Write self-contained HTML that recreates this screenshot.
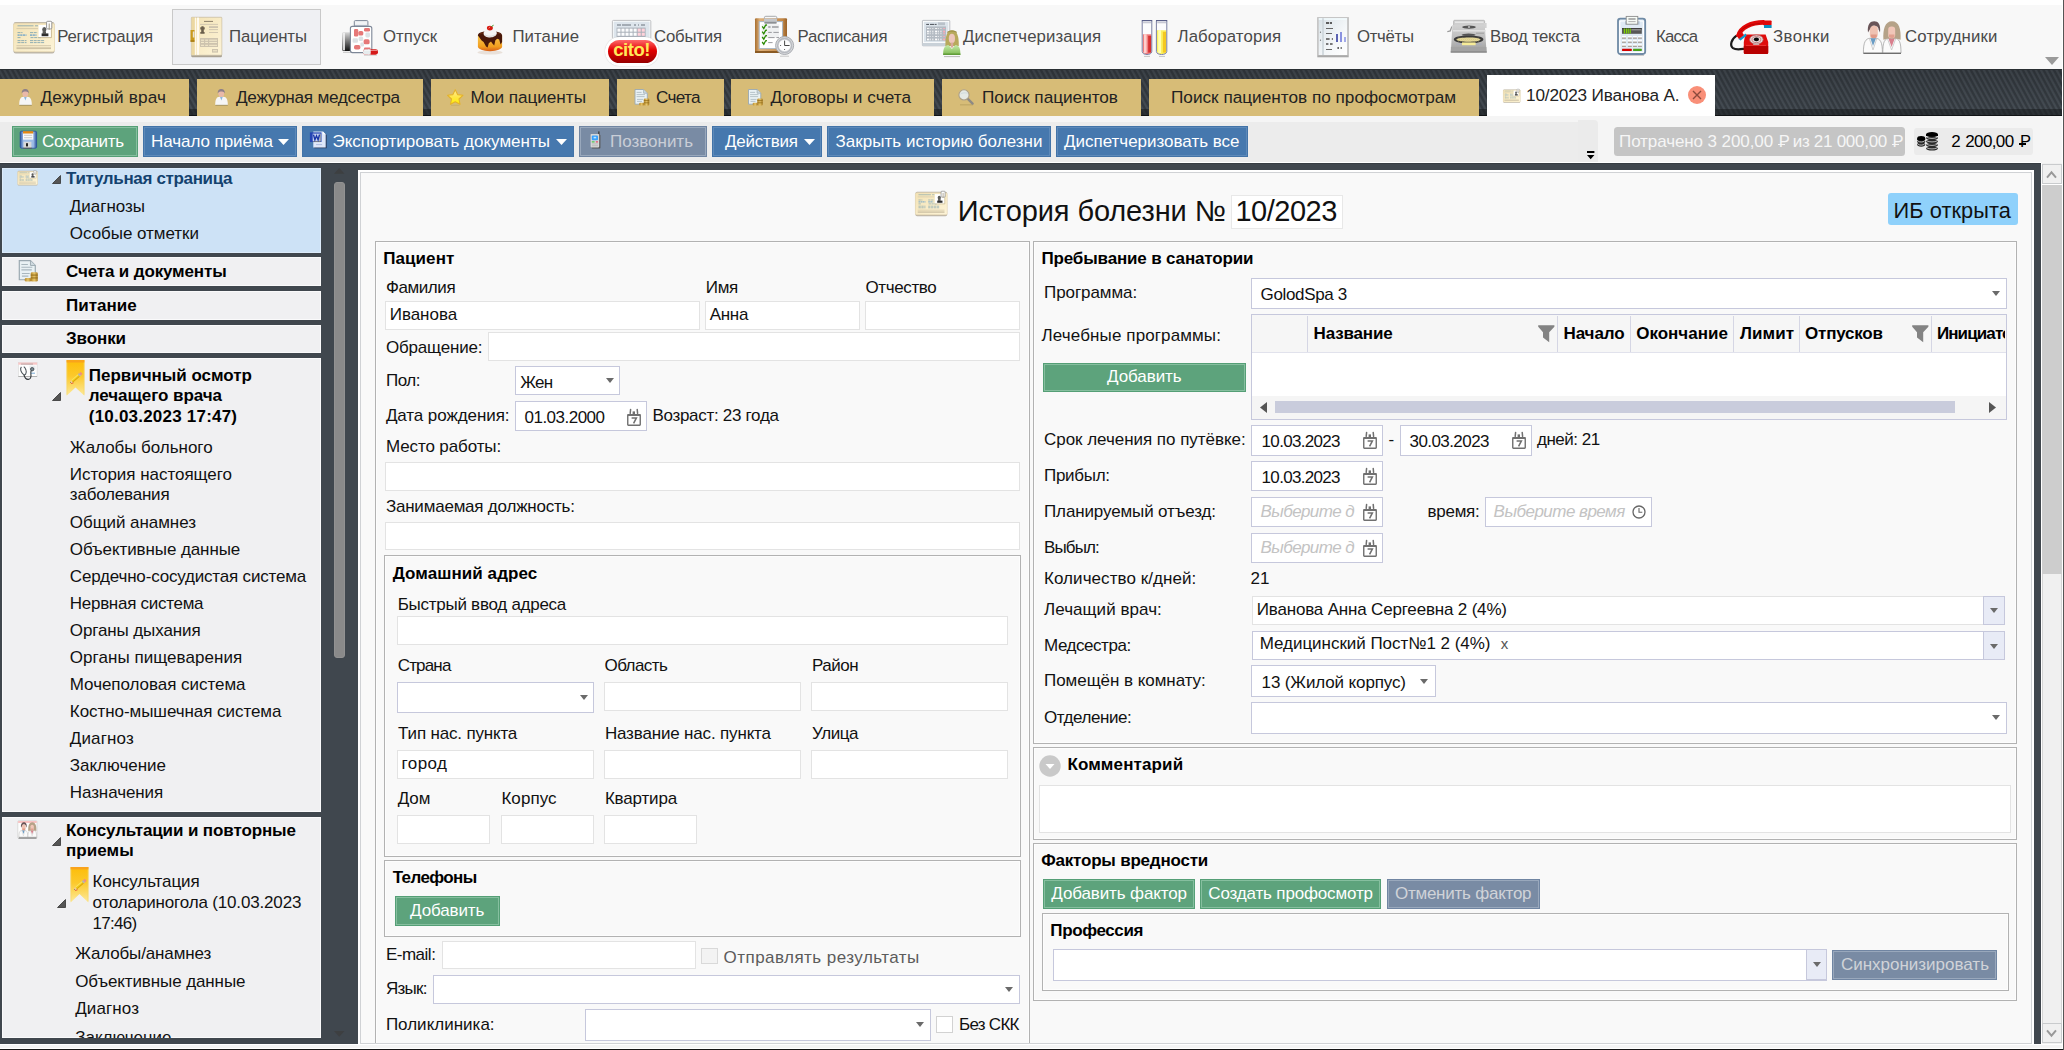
<!DOCTYPE html>
<html lang="ru"><head><meta charset="utf-8"><title>История болезни</title>
<style>
html,body{margin:0;padding:0}
body{width:2064px;height:1050px;overflow:hidden;position:relative;background:#40474e;font-family:"Liberation Sans",sans-serif;color:#000}
div,span.t,svg{position:absolute;box-sizing:border-box}
span.t{white-space:nowrap}
svg{overflow:visible}
.grp{background:#f9f9f9;border:1px solid #b2b2b2;box-shadow:inset 0 0 0 1px #fdfdfd}
.inp{background:#fff;border:1px solid #e3e3e3}
.cmb{background:#fff;border:1px solid #c6c8dc}
.tab{background:#d9ba70}
.li{background:#f0f0f2}

</style></head><body>
<div style="left:0px;top:0px;width:2064px;height:5px;background:#ffffff;"></div>
<div style="left:0px;top:5px;width:2062px;height:63.5px;background:#f8f8f8;"></div>
<div style="left:172px;top:9px;width:149px;height:56px;background:#eff0f3;border:1px solid #c9c9c9;"></div>
<span class="t" style="left:57.20px;top:29.00px;font-size:16.8px;line-height:16.8px;color:#4a4a4a;letter-spacing:-0.221px;">Регистрация</span>
<span class="t" style="left:229.00px;top:29.00px;font-size:16.8px;line-height:16.8px;color:#4a4a4a;letter-spacing:-0.105px;">Пациенты</span>
<span class="t" style="left:383.00px;top:29.00px;font-size:16.8px;line-height:16.8px;color:#4a4a4a;letter-spacing:0.047px;">Отпуск</span>
<span class="t" style="left:512.50px;top:29.00px;font-size:16.8px;line-height:16.8px;color:#4a4a4a;letter-spacing:0.042px;">Питание</span>
<span class="t" style="left:654.00px;top:29.00px;font-size:16.8px;line-height:16.8px;color:#4a4a4a;letter-spacing:-0.214px;">События</span>
<span class="t" style="left:797.50px;top:29.00px;font-size:16.8px;line-height:16.8px;color:#4a4a4a;letter-spacing:-0.253px;">Расписания</span>
<span class="t" style="left:963.00px;top:29.00px;font-size:16.8px;line-height:16.8px;color:#4a4a4a;letter-spacing:0.103px;">Диспетчеризация</span>
<span class="t" style="left:1177.50px;top:29.00px;font-size:16.8px;line-height:16.8px;color:#4a4a4a;letter-spacing:0.128px;">Лаборатория</span>
<span class="t" style="left:1357.00px;top:29.00px;font-size:16.8px;line-height:16.8px;color:#4a4a4a;letter-spacing:-0.312px;">Отчёты</span>
<span class="t" style="left:1490.00px;top:29.00px;font-size:16.8px;line-height:16.8px;color:#4a4a4a;letter-spacing:-0.292px;">Ввод текста</span>
<span class="t" style="left:1656.00px;top:29.00px;font-size:16.8px;line-height:16.8px;color:#4a4a4a;letter-spacing:-0.809px;">Касса</span>
<span class="t" style="left:1773.00px;top:29.00px;font-size:16.8px;line-height:16.8px;color:#4a4a4a;letter-spacing:0.463px;">Звонки</span>
<span class="t" style="left:1905.00px;top:29.00px;font-size:16.8px;line-height:16.8px;color:#4a4a4a;letter-spacing:0.177px;">Сотрудники</span>
<svg style="left:2045px;top:57px;" width="14" height="8" viewBox="0 0 14 8"><path d="M0 0H14L7 8Z" fill="#9a9a9a"/></svg>
<div style="left:0px;top:68.5px;width:2064px;height:47.5px;background:linear-gradient(rgba(0,0,0,0.14),rgba(0,0,0,0) 85%),repeating-linear-gradient(61.6deg,#343a40 0,#343a40 1.3px,#444b52 2.3px,#444b52 3.4px,#343a40 4.57px);"></div>
<div style="left:0px;top:68.5px;width:2064px;height:1px;background:#2a2f33;"></div>
<div style="left:0px;top:109px;width:2064px;height:6.5px;background:repeating-linear-gradient(61.6deg,#25292d 0,#25292d 1.3px,#2c3135 2.3px,#2c3135 3.4px,#25292d 4.57px);"></div>
<div style="left:0px;top:115.3px;width:2064px;height:0.9px;background:#121416;"></div>
<div style="left:0px;top:79px;width:189px;height:37px;background:#d7bc77;"></div>
<span class="t" style="left:40.50px;top:89.00px;font-size:17.2px;line-height:17.2px;color:#222;letter-spacing:0.150px;">Дежурный врач</span>
<div style="left:197px;top:79px;width:226px;height:37px;background:#d7bc77;"></div>
<span class="t" style="left:236.00px;top:89.00px;font-size:17.2px;line-height:17.2px;color:#222;letter-spacing:-0.268px;">Дежурная медсестра</span>
<div style="left:431px;top:79px;width:178px;height:37px;background:#d7bc77;"></div>
<span class="t" style="left:470.50px;top:89.00px;font-size:17.2px;line-height:17.2px;color:#222;letter-spacing:-0.050px;">Мои пациенты</span>
<div style="left:617px;top:79px;width:107px;height:37px;background:#d7bc77;"></div>
<span class="t" style="left:656.00px;top:89.00px;font-size:17.2px;line-height:17.2px;color:#222;letter-spacing:-0.727px;">Счета</span>
<div style="left:731px;top:79px;width:203px;height:37px;background:#d7bc77;"></div>
<span class="t" style="left:770.50px;top:89.00px;font-size:17.2px;line-height:17.2px;color:#222;letter-spacing:0.034px;">Договоры и счета</span>
<div style="left:942px;top:79px;width:199px;height:37px;background:#d7bc77;"></div>
<span class="t" style="left:982.00px;top:89.00px;font-size:17.2px;line-height:17.2px;color:#222;letter-spacing:-0.010px;">Поиск пациентов</span>
<div style="left:1149px;top:79px;width:330px;height:37px;background:#d7bc77;"></div>
<span class="t" style="left:1171.00px;top:89.00px;font-size:17.2px;line-height:17.2px;color:#222;">Поиск пациентов по профосмотрам</span>
<div style="left:1487px;top:75px;width:228px;height:41px;background:#ffffff;"></div>
<span class="t" style="left:1526.00px;top:87.00px;font-size:17.2px;line-height:17.2px;color:#222;letter-spacing:-0.166px;">10/2023 Иванова А.</span>
<svg style="left:1688px;top:86.1px;" width="18" height="18" viewBox="0 0 18 18"><circle cx="9" cy="9" r="9" fill="#f98f78"/><path d="M5 5L13 13M13 5L5 13" stroke="#8a4a3c" stroke-width="1.4"/></svg>
<div style="left:0px;top:116px;width:2064px;height:47px;background:#f5f5f5;"></div>
<div style="left:0px;top:122px;width:1579px;height:40px;background:#ececec;"></div>
<div style="left:1578px;top:120px;width:19.7px;height:42px;background:#ebebeb;border-top-right-radius:4px;"></div>
<div style="left:12px;top:126px;width:126px;height:31px;background:#5da37c;border:1px solid #559f76;box-shadow:inset 0 0 0 1px #86bf9f;"></div>
<div style="left:143px;top:126px;width:154px;height:31px;background:#4678ae;border:1px solid #4273a8;box-shadow:inset 0 0 0 1px #5d89b9;"></div>
<div style="left:302px;top:126px;width:272px;height:31px;background:#4678ae;border:1px solid #4273a8;box-shadow:inset 0 0 0 1px #4678ae;"></div>
<div style="left:579px;top:126px;width:128px;height:31px;background:#798ba4;border:1px solid #7085a2;box-shadow:inset 0 0 0 1px #99a8bc;"></div>
<div style="left:712px;top:126px;width:110px;height:31px;background:#4678ae;border:1px solid #4273a8;box-shadow:inset 0 0 0 1px #5d89b9;"></div>
<div style="left:827px;top:126px;width:224px;height:31px;background:#4678ae;border:1px solid #4273a8;box-shadow:inset 0 0 0 1px #5d89b9;"></div>
<div style="left:1056px;top:126px;width:192px;height:31px;background:#4678ae;border:1px solid #4273a8;box-shadow:inset 0 0 0 1px #5d89b9;"></div>
<span class="t" style="left:42.00px;top:133.00px;font-size:17px;line-height:17px;color:#fff;letter-spacing:-0.311px;">Сохранить</span>
<span class="t" style="left:151.00px;top:133.00px;font-size:17px;line-height:17px;color:#fff;letter-spacing:-0.060px;">Начало приёма</span>
<span class="t" style="left:332.50px;top:133.00px;font-size:17px;line-height:17px;color:#fff;">Экспортировать документы</span>
<span class="t" style="left:610.00px;top:133.00px;font-size:17px;line-height:17px;color:#c9ced7;letter-spacing:-0.014px;">Позвонить</span>
<span class="t" style="left:725.00px;top:133.00px;font-size:17px;line-height:17px;color:#fff;letter-spacing:-0.212px;">Действия</span>
<span class="t" style="left:835.50px;top:133.00px;font-size:17px;line-height:17px;color:#fff;letter-spacing:0.038px;">Закрыть историю болезни</span>
<span class="t" style="left:1064.00px;top:133.00px;font-size:17px;line-height:17px;color:#fff;letter-spacing:-0.016px;">Диспетчеризовать все</span>
<svg style="left:278px;top:139px;" width="11" height="6" viewBox="0 0 11 6"><path d="M0 0H11L5.5 6Z" fill="#fff"/></svg>
<svg style="left:556px;top:139px;" width="11" height="6" viewBox="0 0 11 6"><path d="M0 0H11L5.5 6Z" fill="#fff"/></svg>
<svg style="left:804px;top:139px;" width="11" height="6" viewBox="0 0 11 6"><path d="M0 0H11L5.5 6Z" fill="#fff"/></svg>
<svg style="left:1586.8px;top:151px;" width="7.4" height="8.4" viewBox="0 0 7.4 8.4"><path d="M0 0H7.4V1.9H0Z M0 4.1H7.4L3.7 8.2Z" fill="#000"/></svg>
<div style="left:1614.2px;top:127.2px;width:290.6px;height:28.5px;background:#c5c5c5;border-radius:3.5px;"></div>
<span class="t" style="left:1619.00px;top:133.00px;font-size:17px;line-height:17px;color:#f6f6f6;letter-spacing:-0.093px;">Потрачено 3 200,00</span>
<span class="t" style="left:1778.70px;top:133.00px;font-size:16.5px;line-height:16.5px;color:#f6f6f6;">Р</span>
<div style="left:1778.2px;top:143.6px;width:6.6px;height:1.4px;background:#f6f6f6;"></div>
<span class="t" style="left:1792.70px;top:133.00px;font-size:17px;line-height:17px;color:#f6f6f6;letter-spacing:-0.278px;">из 21 000,00</span>
<span class="t" style="left:1892.50px;top:133.00px;font-size:16.5px;line-height:16.5px;color:#f6f6f6;">Р</span>
<div style="left:1892px;top:143.6px;width:6.6px;height:1.4px;background:#f6f6f6;"></div>
<div style="left:1913.5px;top:127.8px;width:119px;height:27.6px;background:#ebebeb;border-radius:3px;"></div>
<span class="t" style="left:1951.20px;top:133.00px;font-size:17px;line-height:17px;">2</span>
<span class="t" style="left:1965.20px;top:133.00px;font-size:17px;line-height:17px;letter-spacing:-0.600px;">200,00</span>
<span class="t" style="left:2019.90px;top:133.00px;font-size:16.5px;line-height:16.5px;">Р</span>
<div style="left:2019.4px;top:143.4px;width:6.6px;height:1.3px;background:#000;"></div>
<svg style="left:0;top:0" width="2064" height="170" viewBox="0 0 2064 170"><defs>
<linearGradient id="gCream" x1="0" y1="0" x2="1" y2="1"><stop offset="0" stop-color="#f3e2b4"/><stop offset="1" stop-color="#fdf4d8"/></linearGradient>
<linearGradient id="gRed" x1="0" y1="0" x2="0" y2="1"><stop offset="0" stop-color="#ff6868"/><stop offset="0.45" stop-color="#e00000"/><stop offset="1" stop-color="#980000"/></linearGradient>
<linearGradient id="gCake" x1="0" y1="0" x2="0" y2="1"><stop offset="0" stop-color="#f8c850"/><stop offset="0.7" stop-color="#f2a020"/><stop offset="1" stop-color="#d8601a"/></linearGradient>
<linearGradient id="gBoard" x1="0" y1="0" x2="1" y2="0"><stop offset="0" stop-color="#a86f30"/><stop offset="0.15" stop-color="#ddb07a"/><stop offset="0.85" stop-color="#c48a4a"/><stop offset="1" stop-color="#9a6228"/></linearGradient>
<linearGradient id="gDoc" x1="0" y1="0" x2="1" y2="1"><stop offset="0" stop-color="#d9e2e7"/><stop offset="0.6" stop-color="#f4f7f9"/><stop offset="1" stop-color="#ffffff"/></linearGradient>
<linearGradient id="gTyp" x1="0" y1="0" x2="0" y2="1"><stop offset="0" stop-color="#d2d2d2"/><stop offset="0.5" stop-color="#bdbdbd"/><stop offset="1" stop-color="#9a9a9a"/></linearGradient>
<linearGradient id="gCap" x1="0" y1="0" x2="0" y2="1"><stop offset="0" stop-color="#d8d8d8"/><stop offset="0.4" stop-color="#888"/><stop offset="1" stop-color="#111"/></linearGradient>
<linearGradient id="gStar" x1="0" y1="0" x2="0" y2="1"><stop offset="0" stop-color="#ffe9a0"/><stop offset="0.55" stop-color="#ffe640"/><stop offset="1" stop-color="#fff200"/></linearGradient>
<linearGradient id="gBm" x1="0" y1="0" x2="0" y2="1"><stop offset="0" stop-color="#fdbd08"/><stop offset="0.45" stop-color="#fcc92c"/><stop offset="1" stop-color="#fdea9c"/></linearGradient>
<linearGradient id="gGold" x1="0" y1="0" x2="1" y2="0"><stop offset="0" stop-color="#b88a2c"/><stop offset="0.5" stop-color="#e6c468"/><stop offset="1" stop-color="#a87a20"/></linearGradient>
<linearGradient id="gGreen" x1="0" y1="0" x2="0" y2="1"><stop offset="0" stop-color="#c4eaa8"/><stop offset="1" stop-color="#7db850"/></linearGradient>
<linearGradient id="gFl" x1="0" y1="0" x2="1" y2="0"><stop offset="0" stop-color="#2e58a8"/><stop offset="0.2" stop-color="#9dbce6"/><stop offset="0.8" stop-color="#9dbce6"/><stop offset="1" stop-color="#2a4f9c"/></linearGradient>
</defs><g transform="translate(13,21) scale(1.0000,1.0000)"><rect x="0.5" y="1" width="41" height="31.5" rx="2.2" fill="#bcb5a8"/><rect x="0.5" y="2.3" width="41" height="28.4" rx="2" fill="url(#gCream)"/><rect x="0.5" y="2.3" width="41" height="28.4" rx="2" fill="none" stroke="#e9d9ae" stroke-width="0.6"/><path d="M4.5 4.8H20.5M22 4.8H25" stroke="#5a8eaa" stroke-width="0.7" opacity="0.85"/><path d="M3.5 7.6H25" stroke="#d2c6a8" stroke-width="0.9"/><path d="M4.5 11.6H9.5M17 11.6H24.5M4.5 16.6H8M17.5 16.6H28M4.5 19.6H13.5M17 19.6H31.5M4.5 21.6H13.5M17 21.6H31.5" stroke="#5a8eaa" stroke-width="0.75" stroke-dasharray="3 0.7" opacity="0.85"/><path d="M4.5 14.1H13.5M17 14.1H23.5" stroke="#8fb4c8" stroke-width="1.7" stroke-dasharray="2.2 0.5"/><path d="M3.5 24.7H38" stroke="#cfc3a6" stroke-width="0.9"/><rect x="3.5" y="26.3" width="34.5" height="1.8" fill="#cfc3a6"/><rect x="25.6" y="4" width="12.6" height="12.4" fill="#fff"/><path d="M25.6 16.6H38.4V5" fill="none" stroke="#b9a67a" stroke-width="0.7"/><ellipse cx="31.3" cy="8.6" rx="2.1" ry="2.6" fill="#5a5a58"/><rect x="29.6" y="10.5" width="3.4" height="2.2" fill="#5a5a58"/><rect x="28.6" y="12.4" width="6.8" height="2.8" fill="#2e2e2e"/><rect x="33.6" y="0.3" width="5.2" height="7.6" rx="1" fill="#fff" stroke="#8a8a8a" stroke-width="0.9"/><path d="M36.2 2.5V8.8" stroke="#a09880" stroke-width="1"/></g><g transform="translate(191,17)"><rect x="0.3" y="0.2" width="30.6" height="40" rx="1" fill="#a9a192"/><rect x="0.3" y="0.2" width="30.6" height="38" rx="0.8" fill="url(#gCream)" stroke="#c9bfa8" stroke-width="0.6"/><rect x="0.6" y="0.6" width="3.2" height="37.2" fill="#ecd8a2"/><rect x="3.9" y="0.6" width="1" height="37.2" fill="#fffaf0"/><rect x="6" y="0.6" width="2" height="37.2" fill="#fffaf0"/><rect x="-0.5" y="13" width="4" height="11.5" fill="#c9991c"/><rect x="1.8" y="14.5" width="1.6" height="6" fill="#e9e2d0"/><rect x="-0.5" y="23.5" width="4" height="1.2" fill="#9a6e08"/><path d="M13 4.4H22" stroke="#8a7e68" stroke-width="1"/><path d="M9 7.4H27" stroke="#cfc4ae" stroke-width="0.9"/><path d="M10.4 9.2H12.6V10.3H13.7V12.6H12.8V15H13.6V16.8H9.3V15H10.2V12.6H9.3V10.3H10.4Z" fill="#6b5f4c"/><rect x="18" y="9.2" width="9" height="1.8" fill="#cdc3ae"/><path d="M18 12.6H27M18 15.5H27" stroke="#cdc3ae" stroke-width="0.9"/><rect x="9" y="21" width="18" height="9" fill="#cdc3ae"/><path d="M10 23.2H13M14.2 23.2H17M18.2 23.2H26" stroke="#fbf0d0" stroke-width="0.9"/><path d="M10 25.4H13M14.2 25.4H17M18.2 25.4H26" stroke="#fbf0d0" stroke-width="0.9"/><path d="M10 28.3H13M14.2 28.3H17M18.2 28.3H26" stroke="#fbf0d0" stroke-width="0.9"/><rect x="21" y="32" width="6" height="3.6" fill="#cdc3ae"/><path d="M22 33.8H26" stroke="#fbf0d0" stroke-width="0.9"/></g><g transform="translate(342,20)"><rect x="0.3" y="12.3" width="8.2" height="18.6" rx="1.2" fill="url(#gCap)"/><rect x="0.8" y="12.8" width="2.2" height="17.6" fill="#f4f4f4" opacity="0.85"/><path d="M1 32.3H9" stroke="#b8b8b8" stroke-width="0.8"/><rect x="12.3" y="0.6" width="13.6" height="6.6" rx="1" fill="#f1f3f6" stroke="#7d8797" stroke-width="1"/><path d="M13 5.6H25.4" stroke="#b8c0cc" stroke-width="1.4"/><rect x="8.4" y="6.4" width="21.4" height="26.2" rx="2" fill="#fff" stroke="#7d8797" stroke-width="1.1"/><g fill="#e67878"><rect x="12" y="9" width="4.2" height="7.5" rx="1.2"/><rect x="16.3" y="11" width="5" height="4.6" rx="1.6"/><rect x="22" y="8" width="6" height="3.6" rx="1.4"/><rect x="21.6" y="19.3" width="6" height="5" rx="1.6"/><rect x="12" y="25" width="6.4" height="4.6" rx="1.8"/><rect x="22" y="27.5" width="6.6" height="2.4" rx="1"/></g><g fill="#dde2e5"><rect x="16.6" y="16.5" width="4.6" height="4.6" rx="1.6"/><rect x="23.4" y="12.4" width="4.6" height="5" rx="1.4"/><rect x="10.6" y="18.2" width="5.4" height="4.6" rx="1.4"/><rect x="18.4" y="22.6" width="3.6" height="3.8" rx="1.2"/></g><rect x="21" y="29.3" width="15" height="5.4" rx="2.4" fill="#d51a1a"/><rect x="21" y="29.3" width="7.4" height="5.4" rx="2.4" fill="#e6ecee"/><rect x="26" y="29.3" width="2.6" height="5.4" fill="#e6ecee"/><path d="M22.5 30.4H35" stroke="#fff" stroke-width="0.8" opacity="0.7"/><path d="M22 35.3H35" stroke="#999" stroke-width="0.6" opacity="0.6"/></g><g transform="translate(476,25)"><ellipse cx="14" cy="27.5" rx="12.5" ry="2" fill="#e9e1da"/><path d="M1.9 10V21.5C1.9 24 7 26.2 14 26.2S26.1 24 26.1 21.5V10Z" fill="url(#gCake)"/><path d="M1.9 10.5C1.9 7.6 7 6 14 6S26.1 7.6 26.1 10.5V17L24.6 19.6L23.2 14.5L21.2 13.8L19.4 15.2L18.2 20.4L16.4 18.6L15 16.6L12.8 18.2L11.6 22.6L10 21.4L7.6 17L5.6 15.6L3.4 12.6Z" fill="#48180a"/><path d="M4 9C6 7 22 7 24.5 9" stroke="#6a2c12" stroke-width="1" fill="none"/><path d="M7.6 8.4C7.6 5.6 10 4.4 14.4 4.4S20.8 5.8 20.8 8.2C20.8 10.6 17 12.4 14 12.4S7.6 11 7.6 8.4Z" fill="#f4f4f4"/><path d="M9 9.8C11 11.8 17 11.8 19.6 9.6" stroke="#d0d0d0" stroke-width="0.8" fill="none"/><ellipse cx="13.9" cy="3.1" rx="3" ry="2.3" fill="#d81a10"/><path d="M12.6 3.2L14.2 1.8" stroke="#f6a0a0" stroke-width="0.8"/><path d="M15.4 1.6L17.6 0.2" stroke="#3c9a28" stroke-width="1"/></g><g transform="translate(612,20)"><rect x="0.4" y="0.4" width="38.4" height="18" rx="1" fill="#fff" stroke="#aeb0b4" stroke-width="0.8"/><rect x="1.6" y="1.6" width="36" height="16.6" fill="#dde5ec"/><path d="M5 5H9M10 5H19M22 5H24M26 5H27M29 5H33" stroke="#6a737c" stroke-width="1"/><rect x="4.6" y="7.6" width="29" height="10.4" fill="#a8afb8"/><rect x="5.40" y="8.60" width="3.1" height="3.1" fill="#fbfcfd"/><rect x="9.45" y="8.60" width="3.1" height="3.1" fill="#fbfcfd"/><rect x="13.50" y="8.60" width="3.1" height="3.1" fill="#fbfcfd"/><rect x="17.55" y="8.60" width="3.1" height="3.1" fill="#fbfcfd"/><rect x="21.60" y="8.60" width="3.1" height="3.1" fill="#fbfcfd"/><rect x="25.65" y="8.60" width="3.1" height="3.1" fill="#ffd2da"/><rect x="29.70" y="8.60" width="3.1" height="3.1" fill="#ffd2da"/><rect x="5.40" y="12.70" width="3.1" height="3.1" fill="#fbfcfd"/><rect x="9.45" y="12.70" width="3.1" height="3.1" fill="#fbfcfd"/><rect x="13.50" y="12.70" width="3.1" height="3.1" fill="#fbfcfd"/><rect x="17.55" y="12.70" width="3.1" height="3.1" fill="#fbfcfd"/><rect x="21.60" y="12.70" width="3.1" height="3.1" fill="#fbfcfd"/><rect x="25.65" y="12.70" width="3.1" height="3.1" fill="#ffd2da"/><rect x="29.70" y="12.70" width="3.1" height="3.1" fill="#ffd2da"/></g><g transform="translate(754,16)"><rect x="1" y="2.2" width="32" height="34.8" rx="1" fill="url(#gBoard)"/><rect x="1" y="35" width="32" height="2" fill="#8a5a24"/><rect x="5.2" y="5.6" width="23.4" height="27" fill="#fff" stroke="#a9b7c6" stroke-width="1"/><rect x="7.6" y="8.2" width="17.6" height="13.6" fill="#f0f1f2"/><rect x="10.4" y="0.3" width="12.4" height="4" rx="1.4" fill="none" stroke="#a7a9ac" stroke-width="1"/><rect x="10" y="2.4" width="13" height="5.2" rx="0.8" fill="#c4c6c9"/><rect x="10.6" y="5.8" width="11.8" height="1.8" fill="#8e9094"/><path d="M8.2 10.4L9.8 12.6L11.6 9.2L13 9" fill="none" stroke="#2a8a00" stroke-width="1.3"/><path d="M8.2 15.6L9.8 17.8L11.6 14.399999999999999L13 14.2" fill="none" stroke="#2a8a00" stroke-width="1.3"/><path d="M8.2 21.0L9.8 23.200000000000003L11.6 19.8L13 19.6" fill="none" stroke="#2a8a00" stroke-width="1.3"/><path d="M8.2 26.0L9.8 28.200000000000003L11.6 24.8L13 24.6" fill="none" stroke="#2a8a00" stroke-width="1.3"/><path d="M14.2 11H16.6M18 11H24.6" stroke="#9a9ca0" stroke-width="1.6"/><path d="M14.2 16.4H17.8M19.4 16.4H24.8M14.2 21.6H20.6M22.4 21.6H25M14.2 26.6H18.6" stroke="#8e9094" stroke-width="0.9"/><circle cx="30.6" cy="29.5" r="9" fill="#d9dbde" stroke="#a8abb0" stroke-width="1"/><circle cx="30.6" cy="29.5" r="7" fill="none" stroke="#b7bac0" stroke-width="1.4"/><circle cx="30.6" cy="29.5" r="5.8" fill="#fdfdfd"/><path d="M30.6 24.6V29.5H35.6" fill="none" stroke="#333" stroke-width="0.9"/><circle cx="26.6" cy="29.5" r="0.5" fill="#333"/><circle cx="30.6" cy="33.5" r="0.5" fill="#333"/><path d="M26 40.2H35" stroke="#c8c8c8" stroke-width="1"/></g><g transform="translate(922,20)"><rect x="0.4" y="0.4" width="27.4" height="25.4" rx="0.6" fill="#fff" stroke="#b6b9bd" stroke-width="0.9"/><rect x="0.4" y="23" width="27.4" height="3" fill="#c9d1d8"/><rect x="1.8" y="1.8" width="24.6" height="20.4" fill="#dce4eb"/><path d="M4.2 4.4H7M8 4.4H12M12.6 4.4H14.6" stroke="#4a5058" stroke-width="1"/><rect x="16" y="2.4" width="7" height="2.8" fill="#b9c1c9"/><rect x="4" y="6.4" width="20" height="14.4" fill="#b4bbc3"/><rect x="5.00" y="8.00" width="1.9" height="0.9" fill="#fff"/><rect x="7.70" y="8.00" width="0.9" height="0.9" fill="#fff"/><rect x="10.40" y="8.00" width="0.9" height="0.9" fill="#fff"/><rect x="13.10" y="8.00" width="1.9" height="0.9" fill="#fff"/><rect x="15.80" y="8.00" width="0.9" height="0.9" fill="#fff"/><rect x="18.50" y="8.00" width="0.9" height="0.9" fill="#fff"/><rect x="21.20" y="8.00" width="1.9" height="0.9" fill="#ffa8b4"/><rect x="5.00" y="10.65" width="1.9" height="1.7" fill="#fff"/><rect x="7.70" y="10.65" width="0.9" height="1.7" fill="#fff"/><rect x="10.40" y="10.65" width="0.9" height="1.7" fill="#fff"/><rect x="13.10" y="10.65" width="1.9" height="1.7" fill="#fff"/><rect x="15.80" y="10.65" width="0.9" height="1.7" fill="#fff"/><rect x="18.50" y="10.65" width="0.9" height="1.7" fill="#fff"/><rect x="21.20" y="10.65" width="1.9" height="1.7" fill="#ffa8b4"/><rect x="5.00" y="13.30" width="1.9" height="0.9" fill="#fff"/><rect x="7.70" y="13.30" width="0.9" height="0.9" fill="#fff"/><rect x="10.40" y="13.30" width="0.9" height="0.9" fill="#fff"/><rect x="13.10" y="13.30" width="1.9" height="0.9" fill="#fff"/><rect x="15.80" y="13.30" width="0.9" height="0.9" fill="#fff"/><rect x="18.50" y="13.30" width="0.9" height="0.9" fill="#fff"/><rect x="21.20" y="13.30" width="1.9" height="0.9" fill="#ffa8b4"/><rect x="5.00" y="15.95" width="1.9" height="0.9" fill="#fff"/><rect x="7.70" y="15.95" width="0.9" height="0.9" fill="#fff"/><rect x="10.40" y="15.95" width="0.9" height="0.9" fill="#fff"/><rect x="13.10" y="15.95" width="1.9" height="0.9" fill="#fff"/><rect x="15.80" y="15.95" width="0.9" height="0.9" fill="#fff"/><rect x="18.50" y="15.95" width="0.9" height="0.9" fill="#fff"/><rect x="21.20" y="15.95" width="1.9" height="0.9" fill="#ffa8b4"/><rect x="5.00" y="18.60" width="1.9" height="1.7" fill="#fff"/><rect x="7.70" y="18.60" width="0.9" height="1.7" fill="#fff"/><rect x="10.40" y="18.60" width="0.9" height="1.7" fill="#fff"/><rect x="13.10" y="18.60" width="1.9" height="1.7" fill="#fff"/><rect x="15.80" y="18.60" width="0.9" height="1.7" fill="#fff"/><rect x="18.50" y="18.60" width="0.9" height="1.7" fill="#fff"/><rect x="21.20" y="18.60" width="1.9" height="1.7" fill="#ffa8b4"/><path d="M23.4 26C23.2 16 25 10.2 30 10.2S37 16 36.8 26Z" fill="#b8a95c"/><path d="M25 12.5C27 10.5 33 10.5 35 12.5" stroke="#8f8238" stroke-width="0.8" fill="none"/><ellipse cx="29.9" cy="18.6" rx="3.1" ry="4.8" fill="#edc6bc"/><rect x="28.8" y="22.6" width="2.4" height="5" fill="#d8a89c"/><path d="M21.2 35C21 28 23 25.2 26.4 25L29.9 29L33.4 25C37 25.2 38.6 28 38.4 35Z" fill="url(#gGreen)"/><path d="M21.2 34.2H38.4" stroke="#5e9a38" stroke-width="1.4"/><path d="M22 36.6H38" stroke="#b8b8b8" stroke-width="1"/></g><g transform="translate(1141,20)"><path d="M1.2 0.6V31.5C1.2 35.5 10.799999999999999 35.5 10.799999999999999 31.5V0.6Z" fill="#fcfcfd"/><path d="M1.7999999999999998 14.2H10.2V31.5C10.2 34.9 1.7999999999999998 34.9 1.7999999999999998 31.5Z" fill="#f08080"/><rect x="3.0" y="14.2" width="2.59" height="18.8" fill="#ffd0cc"/><rect x="7.15" y="15.799999999999999" width="3.07" height="16.8" fill="#d83030"/><path d="M1.2 0.6V31.5C1.2 35.5 10.799999999999999 35.5 10.799999999999999 31.5V0.6" fill="none" stroke="#7a7fa2" stroke-width="1"/><path d="M0.7999999999999999 0.6H11.2" stroke="#5a5f88" stroke-width="1.2"/><path d="M2.0 2.6H9.999999999999998" stroke="#c8c9d4" stroke-width="1.4"/><path d="M15.4 0.6V31.5C15.4 35.5 25.8 35.5 25.8 31.5V0.6Z" fill="#fcfcfd"/><path d="M16.0 10.2H25.2V31.5C25.2 34.9 16.0 34.9 16.0 31.5Z" fill="#fbf060"/><rect x="17.2" y="10.2" width="2.81" height="22.8" fill="#ffffb0"/><rect x="21.85" y="11.799999999999999" width="3.33" height="20.8" fill="#f4c820"/><path d="M15.4 0.6V31.5C15.4 35.5 25.8 35.5 25.8 31.5V0.6" fill="none" stroke="#7a7fa2" stroke-width="1"/><path d="M15.0 0.6H26.2" stroke="#5a5f88" stroke-width="1.2"/><path d="M16.2 2.6H25.0" stroke="#c8c9d4" stroke-width="1.4"/><path d="M3 36.4H9M18 36.4H24" stroke="#c4c4c4" stroke-width="1"/></g><g transform="translate(1317,17)"><rect x="0.3" y="0.3" width="31.4" height="40" fill="#a9a9a9"/><rect x="0.3" y="0.3" width="31.4" height="38" fill="#c9c9c9"/><rect x="1.8" y="1.2" width="28.2" height="36.8" fill="url(#gDoc)"/><rect x="1.8" y="1.2" width="28.2" height="1.6" fill="#f2fbfd"/><rect x="5" y="1.2" width="2" height="36.8" fill="#ccd5da" opacity="0.8"/><circle cx="3.5" cy="15.2" r="0.6" fill="#666"/><circle cx="3.5" cy="23.2" r="0.6" fill="#666"/><path d="M9 6H12.2M13 6H15" stroke="#5c5c5c" stroke-width="2"/><path d="M9 11.5H16M9 16.5H15M9 32.5H15" stroke="#666" stroke-width="1"/><path d="M9 22H12.6M14.8 22H16M9 27H11.4M13 27H15.6" stroke="#777" stroke-width="1.8"/><path d="M20.4 31H22M23.6 31H24.8" stroke="#666" stroke-width="1.8"/><rect x="19" y="17" width="2" height="8" fill="#5a62b2"/><rect x="23" y="15" width="2" height="10" fill="#8a92e0"/><rect x="27" y="20" width="2" height="5" fill="#a4acea"/></g><g transform="translate(1447,20)"><path d="M0.2 11L2.6 10.4L4.4 6.2L5.4 6.6L3.8 11.4L0.4 12.2Z" fill="#9a9a9a"/><rect x="6.6" y="0.3" width="31" height="5.4" rx="1" fill="#cfcfcf" stroke="#a8a8a8" stroke-width="0.7"/><path d="M8 2.2H36.5" stroke="#ececec" stroke-width="1.2"/><rect x="37" y="3" width="2.6" height="5" fill="#d2d2d2"/><path d="M5.4 5H37.8L39.6 33H3.8Z" fill="url(#gTyp)"/><ellipse cx="22" cy="7.1" rx="6.8" ry="1.7" fill="#555"/><ellipse cx="22" cy="6.9" rx="1.2" ry="1" fill="#b8b8b8"/><path d="M6 10.8H38.6" stroke="#e0e0e0" stroke-width="1.6"/><path d="M29 13.2H37" stroke="#9a9a9a" stroke-width="0.9"/><ellipse cx="21.6" cy="19.4" rx="14.8" ry="4" fill="#3a3a3a"/><ellipse cx="21.6" cy="14.8" rx="7" ry="1.2" fill="#555"/><path d="M9.2 19.5C10.4 16.8 32 16.6 33.6 19.4C32 22.4 10.6 22.4 9.2 19.5Z" fill="#e8dc9c"/><path d="M10.6 18.2H32.4M10 19.6H33M11 21H32" stroke="#c9bb78" stroke-width="0.5" stroke-dasharray="1.2 0.8"/><rect x="15" y="22.4" width="13.6" height="2.8" fill="#f7ec98"/><path d="M9 24.2H14M30 24.2H35" stroke="#a8acbc" stroke-width="0.9"/><path d="M3.9 27H39.4L39.6 33H3.8Z" fill="#a3a3a3"/><path d="M3.8 31.6H39.6" stroke="#8e8e8e" stroke-width="1"/></g><g transform="translate(1617,16)"><path d="M3 39.2H27" stroke="#c9c9c9" stroke-width="1.6"/><rect x="1" y="2.6" width="27.2" height="35.4" rx="2.4" fill="#dfeaf4" stroke="#6f8aa5" stroke-width="1.8"/><rect x="2.8" y="5" width="23.6" height="31.4" rx="1" fill="none" stroke="#fff" stroke-width="1.2"/><rect x="8" y="5.2" width="14.6" height="3.4" fill="#b7cadb"/><rect x="9.2" y="0.4" width="11.6" height="7.8" fill="#f6fbf6" stroke="#8e8e8e" stroke-width="0.9"/><path d="M11.4 3H18.6" stroke="#9a9a9a" stroke-width="1.5"/><path d="M11.4 5.6H18.6" stroke="#a8a8a8" stroke-width="0.9"/><rect x="5" y="12.2" width="19.8" height="5.6" fill="#585858"/><rect x="5" y="12.2" width="19.8" height="1" fill="#333"/><path d="M14.4 13.8H23.8" stroke="#cfcfcf" stroke-width="0.7"/><path d="M7.4 12.4V17.6M9.4 12.4V17.6M11.2 12.4V17.6M13.2 12.4V17.6" stroke="#7ddc00" stroke-width="1.1"/><rect x="5" y="20.0" width="3.9" height="1.6" fill="#fff"/><rect x="5" y="21.5" width="3.9" height="1.3" fill="#a9a199"/><rect x="10.9" y="20.0" width="3.9" height="1.6" fill="#fff"/><rect x="10.9" y="21.5" width="3.9" height="1.3" fill="#a9a199"/><rect x="16" y="20.0" width="3.9" height="1.6" fill="#fff"/><rect x="16" y="21.5" width="3.9" height="1.3" fill="#a9a199"/><rect x="21" y="20.0" width="3.9" height="1.6" fill="#fff"/><rect x="21" y="21.5" width="3.9" height="1.3" fill="#a9a199"/><rect x="5" y="24.1" width="3.9" height="1.6" fill="#fff"/><rect x="5" y="25.6" width="3.9" height="1.3" fill="#a9a199"/><rect x="10.9" y="24.1" width="3.9" height="1.6" fill="#fff"/><rect x="10.9" y="25.6" width="3.9" height="1.3" fill="#a9a199"/><rect x="16" y="24.1" width="3.9" height="1.6" fill="#fff"/><rect x="16" y="25.6" width="3.9" height="1.3" fill="#a9a199"/><rect x="21" y="24.1" width="3.9" height="1.6" fill="#fff"/><rect x="21" y="25.6" width="3.9" height="1.3" fill="#a9a199"/><rect x="5" y="28.2" width="3.9" height="1.6" fill="#fff"/><rect x="5" y="29.7" width="3.9" height="1.3" fill="#a9a199"/><rect x="10.9" y="28.2" width="3.9" height="1.6" fill="#fff"/><rect x="10.9" y="29.7" width="3.9" height="1.3" fill="#a9a199"/><rect x="16" y="28.2" width="3.9" height="1.6" fill="#fff"/><rect x="16" y="29.7" width="3.9" height="1.3" fill="#a9a199"/><rect x="21" y="28.2" width="3.9" height="1.6" fill="#fff"/><rect x="21" y="29.7" width="3.9" height="1.3" fill="#a9a199"/><rect x="5" y="32.8" width="9.8" height="2.2" rx="0.4" fill="#d40000"/><rect x="16" y="32.8" width="8.8" height="2.2" rx="0.4" fill="#4aa01a"/></g><g transform="translate(1730,20)"><path d="M6.6 15.6C1.4 19 -0.6 25.4 3 28.2C6 30.2 10 29.4 14.4 28.8" fill="none" stroke="#1a1a1a" stroke-width="2.2"/><path d="M15.4 14.4H35.6L38.2 22V32.4C38.2 33.4 37.4 34 36.4 34H15.6C14.6 34 13.8 33.4 13.8 32.4V22Z" fill="#e00c0c"/><path d="M13.8 26H38.2V32.4C38.2 33.4 37.4 34 36.4 34H15.6C14.6 34 13.8 33.4 13.8 32.4Z" fill="#b80000"/><path d="M16 25.4H36" stroke="#f04040" stroke-width="0.8"/><ellipse cx="26.4" cy="19.6" rx="6.8" ry="4.6" fill="#e8d8d8" stroke="#b06060" stroke-width="0.8"/><ellipse cx="26.4" cy="19.6" rx="4.4" ry="3" fill="none" stroke="#c08080" stroke-width="1"/><ellipse cx="26.4" cy="19.4" rx="2.6" ry="1.8" fill="#050505"/><rect x="23.2" y="23.4" width="6" height="1.6" fill="#c8a8a8"/><path d="M8.2 16.6C10 7 22 2.2 34.4 2.4" fill="none" stroke="#e00808" stroke-width="4.6" stroke-linecap="butt"/><path d="M8.8 14C11.4 7.6 20 4 30 3.6" fill="none" stroke="#a80000" stroke-width="1" opacity="0.7"/><rect x="33" y="0.4" width="8.6" height="4.8" rx="0.8" fill="#e00808"/><rect x="34" y="5" width="7.6" height="3" fill="#0a8fc0"/><path d="M8.4 19L15.6 13.4L16.6 15.8L10.6 20.6Z" fill="#0a9ad0"/><path d="M6 15L9 19L14 15L11 11Z" fill="#e00808"/></g><g transform="translate(1862.4,21) scale(1.0)"><path d="M1 32C1 21 3 17.6 8 17.2H13C18 17.6 20 21 20 32Z" fill="#fbfbfb" stroke="#9a9a9a" stroke-width="0.7"/><path d="M8 17.2L10.6 25L13.6 17.2Z" fill="#6a9cc4"/><path d="M7 17.4L10.6 29L14.4 17.4" fill="none" stroke="#c9c9c9" stroke-width="0.9"/><rect x="7.4" y="4.6" width="8" height="12.4" rx="3.6" fill="#f0c2b2"/><path d="M8.4 13.4H14.4V16C13 17.6 10 17.6 8.4 16Z" fill="#e09a88"/><path d="M5.6 11.6C4.6 3 8 0.2 11.8 0.2S18.6 3 17.6 11.6L16.2 8.4C16 5.6 13 4.6 11.4 4.6S8 6 7.4 8.4Z" fill="#6a5558"/><path d="M20.4 32C20.4 21 22 17.6 27 17.2H32C37 17.6 38.6 21 38.6 32Z" fill="#fbfbfb" stroke="#9a9a9a" stroke-width="0.7"/><path d="M26 17.2L29.2 26L32.4 17.2Z" fill="#d8808e"/><path d="M25 17.4L29.2 29L33.4 17.4" fill="none" stroke="#c9c9c9" stroke-width="0.9"/><path d="M21 18.8C20.4 8 22.6 0.2 29.6 0.2S38.8 8 38.2 18.8L33.6 17.6H25.4Z" fill="#b5a288"/><rect x="25.8" y="5.6" width="7" height="11.6" rx="3.2" fill="#f1c6b8"/><path d="M26.6 13.6H32V16C31 17.4 28 17.4 26.6 16Z" fill="#e2a090"/><path d="M1 32.4H38.6" stroke="#6e6e6e" stroke-width="1.2"/></g><g transform="translate(19,89)"><path d="M0.2 16C0.2 10.6 1.4 8 4.4 7.8H8.4C11.6 8 12.8 10.6 12.8 16Z" fill="#f6f6f6"/><path d="M0.4 16.3H12.8" stroke="#9a8a60" stroke-width="0.8"/><path d="M5 7.8L6.4 11.4L7.8 7.8Z" fill="#8ab8dc"/><ellipse cx="6.3" cy="4.6" rx="2.9" ry="3.4" fill="#e9b9a9"/><path d="M2.8 4.6C2.4 1.2 4.4 0 6.3 0S10.2 1.2 9.8 4.6L9 3.2C8 2.2 4.6 2.2 3.6 3.2Z" fill="#8f8088"/></g><g transform="translate(215,89)"><path d="M0.2 16C0.2 10.6 1.4 8 4.4 7.8H8.4C11.6 8 12.8 10.6 12.8 16Z" fill="#f6f6f6"/><path d="M0.4 16.3H12.8" stroke="#9a8a60" stroke-width="0.8"/><path d="M5 7.8L6.4 11.4L7.8 7.8Z" fill="#8ab8dc"/><ellipse cx="6.3" cy="4.6" rx="2.9" ry="3.4" fill="#e9b9a9"/><path d="M2.8 4.6C2.4 1.2 4.4 0 6.3 0S10.2 1.2 9.8 4.6L9 3.2C8 2.2 4.6 2.2 3.6 3.2Z" fill="#8f8088"/></g><g transform="translate(447,89)"><path d="M8.25 0.7L10.6 5.6L15.9 6.3L12 10L13 15.3L8.25 12.7L3.5 15.3L4.5 10L0.6 6.3L5.9 5.6Z" fill="url(#gStar)" stroke="#e4b22a" stroke-width="1.1" stroke-linejoin="round"/><path d="M4 16.3H12.5" stroke="#b8a060" stroke-width="0.8" opacity="0.6"/></g><g transform="translate(634,89) scale(1.0)"><path d="M1 0.5H9.6L13.3 4.2V15.2H1Z" fill="#e9f1f4" stroke="#9aa8b0" stroke-width="0.9"/><path d="M9.6 0.5V4.2H13.3" fill="#cfdae0" stroke="#9aa8b0" stroke-width="0.7"/><path d="M2.6 3.4H7.6M2.6 5.6H11M2.6 7.6H10.6M3 10.4H9M3 12.4H8" stroke="#a9b7be" stroke-width="0.8"/><rect x="9.8" y="9.4" width="5.4" height="7.2" rx="1" fill="url(#gGold)"/><path d="M9.8 11.6H15.2M9.8 13.8H15.2" stroke="#8a6414" stroke-width="0.7"/><rect x="5.2" y="13.8" width="5" height="2.8" rx="1" fill="url(#gGold)"/></g><g transform="translate(747.5,89) scale(1.0)"><path d="M1 0.5H9.6L13.3 4.2V15.2H1Z" fill="#e9f1f4" stroke="#9aa8b0" stroke-width="0.9"/><path d="M9.6 0.5V4.2H13.3" fill="#cfdae0" stroke="#9aa8b0" stroke-width="0.7"/><path d="M2.6 3.4H7.6M2.6 5.6H11M2.6 7.6H10.6M3 10.4H9M3 12.4H8" stroke="#a9b7be" stroke-width="0.8"/><rect x="9.8" y="9.4" width="5.4" height="7.2" rx="1" fill="url(#gGold)"/><path d="M9.8 11.6H15.2M9.8 13.8H15.2" stroke="#8a6414" stroke-width="0.7"/><rect x="5.2" y="13.8" width="5" height="2.8" rx="1" fill="url(#gGold)"/></g><g transform="translate(958,89)"><path d="M2 15.8H15" stroke="#b09a5a" stroke-width="1.4" opacity="0.5"/><path d="M9.6 9.6L14.6 14.6" stroke="#8e8a84" stroke-width="2.4" stroke-linecap="round"/><circle cx="6" cy="5.9" r="5.1" fill="#e4e9e6" stroke="#ada088" stroke-width="1.1"/><path d="M2.6 5C3.4 3.6 8.6 3.6 9.6 4.4" stroke="#cdd8dc" stroke-width="0.9" fill="none"/></g><g transform="translate(1503,89) scale(0.4167,0.4242)"><rect x="0.5" y="1" width="41" height="31.5" rx="2.2" fill="#bcb5a8"/><rect x="0.5" y="2.3" width="41" height="28.4" rx="2" fill="url(#gCream)"/><rect x="0.5" y="2.3" width="41" height="28.4" rx="2" fill="none" stroke="#e9d9ae" stroke-width="0.6"/><path d="M4.5 4.8H20.5M22 4.8H25" stroke="#5a8eaa" stroke-width="0.7" opacity="0.85"/><path d="M3.5 7.6H25" stroke="#d2c6a8" stroke-width="0.9"/><path d="M4.5 11.6H9.5M17 11.6H24.5M4.5 16.6H8M17.5 16.6H28M4.5 19.6H13.5M17 19.6H31.5M4.5 21.6H13.5M17 21.6H31.5" stroke="#5a8eaa" stroke-width="0.75" stroke-dasharray="3 0.7" opacity="0.85"/><path d="M4.5 14.1H13.5M17 14.1H23.5" stroke="#8fb4c8" stroke-width="1.7" stroke-dasharray="2.2 0.5"/><path d="M3.5 24.7H38" stroke="#cfc3a6" stroke-width="0.9"/><rect x="3.5" y="26.3" width="34.5" height="1.8" fill="#cfc3a6"/><rect x="25.6" y="4" width="12.6" height="12.4" fill="#fff"/><path d="M25.6 16.6H38.4V5" fill="none" stroke="#b9a67a" stroke-width="0.7"/><ellipse cx="31.3" cy="8.6" rx="2.1" ry="2.6" fill="#5a5a58"/><rect x="29.6" y="10.5" width="3.4" height="2.2" fill="#5a5a58"/><rect x="28.6" y="12.4" width="6.8" height="2.8" fill="#2e2e2e"/><rect x="33.6" y="0.3" width="5.2" height="7.6" rx="1" fill="#fff" stroke="#8a8a8a" stroke-width="0.9"/><path d="M36.2 2.5V8.8" stroke="#a09880" stroke-width="1"/></g><g transform="translate(20,131)"><rect x="0.2" y="0.2" width="16.4" height="17" rx="1.4" fill="url(#gFl)"/><rect x="0.2" y="0.2" width="16.4" height="17" rx="1.4" fill="none" stroke="#2a4f9c" stroke-width="0.8"/><rect x="3" y="0.2" width="10.2" height="2.6" fill="#e8880e"/><rect x="3" y="2.6" width="10.2" height="6" fill="#fafafa"/><path d="M4 4.4H12.2M4 6.6H12.2" stroke="#d4d4d4" stroke-width="1.2"/><rect x="3.6" y="10.8" width="7.8" height="6.2" fill="#d9d9d9"/><rect x="6" y="12.2" width="2" height="3.2" fill="#222"/><rect x="3.2" y="16.6" width="8.6" height="1" fill="#555"/></g><g transform="translate(309.5,131)"><path d="M4.8 1.4H14.6L17.2 4V17.2H4.8Z" fill="#2a3a5a"/><path d="M3.8 0.4H13.4L16.2 3.2V16.4H3.8Z" fill="#dfe8fa"/><path d="M13.4 0.4V3.2H16.2" fill="#fff"/><path d="M6.6 13.6H12.6" stroke="#9fb0d8" stroke-width="0.8"/><rect x="0.4" y="1.4" width="11.6" height="9.6" fill="#2444b4"/><rect x="3.2" y="2.6" width="8" height="7.6" fill="#e4ecfa" opacity="0.85"/><path d="M10.6 3V10.6H3.6" fill="none" stroke="#8a8a80" stroke-width="0.9"/><path d="M4 3.6L5.4 8.8L7 4.8L8.6 8.8L10 3.6" fill="none" stroke="#1a36a8" stroke-width="1.4"/></g><g transform="translate(590,131)"><rect x="1.6" y="3.8" width="8.8" height="13.6" rx="0.6" fill="#555"/><rect x="8" y="0.4" width="1.6" height="4" fill="#4a4a4a"/><rect x="0.6" y="3" width="8.6" height="13.4" rx="0.8" fill="#d6d6d6"/><rect x="1.8" y="4.4" width="6.2" height="4.8" rx="1" fill="#38a0fc"/><rect x="3.6" y="5.8" width="2.6" height="1.6" fill="#b8e4ff"/><rect x="1.8" y="10.4" width="2.8" height="1" fill="#30c030"/><rect x="5.8" y="10.4" width="2.2" height="1" fill="#e83050"/><path d="M2 12.9H8M2 14.7H8" stroke="#b0b0b0" stroke-width="0.7"/></g><g transform="translate(1917,132)"><ellipse cx="4.2" cy="12.600000000000001" rx="4" ry="2.1" fill="#2a2a2a"/><path d="M0.8000000000000002 12.000000000000002C2.6 13.500000000000002 5.800000000000001 13.500000000000002 7.6 12.000000000000002" stroke="#c4c4c4" stroke-width="0.9" fill="none"/><ellipse cx="4.2" cy="9.5" rx="4" ry="2.1" fill="#2a2a2a"/><path d="M0.8000000000000002 8.9C2.6 10.4 5.800000000000001 10.4 7.6 8.9" stroke="#c4c4c4" stroke-width="0.9" fill="none"/><ellipse cx="4.2" cy="6.4" rx="4" ry="2.4" fill="#000"/><rect x="0.20000000000000018" y="6.4" width="8" height="1.6" fill="#000"/><ellipse cx="15" cy="16.4" rx="6" ry="2.1" fill="#2a2a2a"/><path d="M9.6 15.799999999999999C12.6 17.299999999999997 17.4 17.299999999999997 20.4 15.799999999999999" stroke="#c4c4c4" stroke-width="0.9" fill="none"/><ellipse cx="15" cy="12.9" rx="6" ry="2.1" fill="#2a2a2a"/><path d="M9.6 12.3C12.6 13.8 17.4 13.8 20.4 12.3" stroke="#c4c4c4" stroke-width="0.9" fill="none"/><ellipse cx="15" cy="9.4" rx="6" ry="2.1" fill="#2a2a2a"/><path d="M9.6 8.8C12.6 10.3 17.4 10.3 20.4 8.8" stroke="#c4c4c4" stroke-width="0.9" fill="none"/><ellipse cx="15" cy="5.9" rx="6" ry="2.1" fill="#2a2a2a"/><path d="M9.6 5.300000000000001C12.6 6.800000000000001 17.4 6.800000000000001 20.4 5.300000000000001" stroke="#c4c4c4" stroke-width="0.9" fill="none"/><ellipse cx="15" cy="2.4" rx="6" ry="2.4" fill="#000"/><rect x="9" y="2.4" width="12" height="1.6" fill="#000"/></g></svg>
<div style="left:604.5px;top:37px;width:54.5px;height:29px;border-radius:14.5px;background:#fff;box-shadow:0 0 1px #bbb"></div>
<div style="left:607.6px;top:39.6px;width:49px;height:23px;border-radius:11.5px;background:linear-gradient(#ff6a6a 0%,#e20000 45%,#c00000 70%,#960000 100%)"></div>
<span class="t" style="left:613.20px;top:41.00px;font-size:18.5px;line-height:18.5px;font-weight:700;color:#ffe95a;letter-spacing:-0.466px;">cito!</span>
<div style="left:0px;top:162px;width:2041px;height:1px;background:#ffffff;"></div>
<div style="left:0px;top:163px;width:2064px;height:881px;background:#40474e;"></div>
<div style="left:0px;top:163px;width:2041px;height:1px;background:#373d43;"></div>
<div style="left:0px;top:1044px;width:2064px;height:1px;background:#ffffff;"></div>
<div style="left:0px;top:1045px;width:2064px;height:3px;background:#f4f4f4;"></div>
<div style="left:0px;top:1048px;width:2064px;height:0.7px;background:#ffffff;"></div>
<div style="left:0px;top:1048.7px;width:2064px;height:1.3px;background:#151515;"></div>
<div style="left:2px;top:167.6px;width:319px;height:85.4px;background:#cde2f6;border:1px solid #dcebfa;"></div>
<div style="left:2px;top:257px;width:319px;height:29px;background:#f0f0f2;border:1px solid #fafafb;"></div>
<div style="left:2px;top:291px;width:319px;height:29px;background:#f0f0f2;border:1px solid #fafafb;"></div>
<div style="left:2px;top:325px;width:319px;height:28px;background:#f0f0f2;border:1px solid #fafafb;"></div>
<div style="left:2px;top:358px;width:319px;height:453.5px;background:#f0f0f2;border:1px solid #fafafb;"></div>
<div style="left:2px;top:817.2px;width:319px;height:221.0px;background:#f0f0f2;border:1px solid #fafafb;"></div>
<div style="left:334px;top:182px;width:11px;height:476px;background:#8a8a8a;border:1px solid #929292;border-radius:3px;"></div>
<svg style="left:334.2px;top:168.2px;" width="10.5" height="5.8" viewBox="0 0 10.5 5.8"><path d="M0 5.8L5.25 0L10.5 5.8Z" fill="#3d3f41"/></svg>
<svg style="left:334.2px;top:1031px;" width="10.5" height="5.8" viewBox="0 0 10.5 5.8"><path d="M0 0L5.25 5.8L10.5 0Z" fill="#3d3f41"/></svg>
<svg style="left:52.3px;top:175px;" width="9" height="9" viewBox="0 0 9 9"><path d="M8.5 0.5V8.5H0.5Z" fill="#555" stroke="#333" stroke-width="0.8"/></svg>
<svg style="left:52.3px;top:392px;" width="9" height="9" viewBox="0 0 9 9"><path d="M8.5 0.5V8.5H0.5Z" fill="#555" stroke="#333" stroke-width="0.8"/></svg>
<svg style="left:52.3px;top:836.5px;" width="9" height="9" viewBox="0 0 9 9"><path d="M8.5 0.5V8.5H0.5Z" fill="#555" stroke="#333" stroke-width="0.8"/></svg>
<svg style="left:56.5px;top:898.5px;" width="9" height="9" viewBox="0 0 9 9"><path d="M8.5 0.5V8.5H0.5Z" fill="#555" stroke="#333" stroke-width="0.8"/></svg>
<span class="t" style="left:66.00px;top:170.00px;font-size:17px;line-height:17px;font-weight:700;color:#14426f;letter-spacing:-0.337px;">Титульная страница</span>
<span class="t" style="left:69.80px;top:198.00px;font-size:17px;line-height:17px;color:#111;letter-spacing:-0.021px;">Диагнозы</span>
<span class="t" style="left:69.80px;top:225.00px;font-size:17px;line-height:17px;color:#111;letter-spacing:-0.036px;">Особые отметки</span>
<span class="t" style="left:66.00px;top:263.00px;font-size:17px;line-height:17px;font-weight:700;letter-spacing:-0.137px;">Счета и документы</span>
<span class="t" style="left:66.00px;top:297.00px;font-size:17px;line-height:17px;font-weight:700;">Питание</span>
<span class="t" style="left:66.00px;top:330.00px;font-size:17px;line-height:17px;font-weight:700;letter-spacing:-0.100px;">Звонки</span>
<span class="t" style="left:88.80px;top:367.00px;font-size:17px;line-height:17px;font-weight:700;letter-spacing:-0.016px;">Первичный осмотр</span>
<span class="t" style="left:88.80px;top:387.00px;font-size:17px;line-height:17px;font-weight:700;letter-spacing:-0.053px;">лечащего врача</span>
<span class="t" style="left:88.80px;top:408.00px;font-size:17px;line-height:17px;font-weight:700;letter-spacing:0.211px;">(10.03.2023 17:47)</span>
<span class="t" style="left:69.80px;top:439.00px;font-size:17px;line-height:17px;color:#111;letter-spacing:-0.037px;">Жалобы больного</span>
<span class="t" style="left:69.80px;top:466.00px;font-size:17px;line-height:17px;color:#111;letter-spacing:-0.034px;">История настоящего</span>
<span class="t" style="left:69.80px;top:486.00px;font-size:17px;line-height:17px;color:#111;letter-spacing:-0.203px;">заболевания</span>
<span class="t" style="left:69.80px;top:514.00px;font-size:17px;line-height:17px;color:#111;letter-spacing:-0.060px;">Общий анамнез</span>
<span class="t" style="left:69.80px;top:541.00px;font-size:17px;line-height:17px;color:#111;letter-spacing:-0.090px;">Объективные данные</span>
<span class="t" style="left:69.80px;top:568.00px;font-size:17px;line-height:17px;color:#111;letter-spacing:-0.182px;">Сердечно-сосудистая система</span>
<span class="t" style="left:69.80px;top:595.00px;font-size:17px;line-height:17px;color:#111;letter-spacing:-0.285px;">Нервная система</span>
<span class="t" style="left:69.80px;top:622.00px;font-size:17px;line-height:17px;color:#111;letter-spacing:-0.114px;">Органы дыхания</span>
<span class="t" style="left:69.80px;top:649.00px;font-size:17px;line-height:17px;color:#111;letter-spacing:0.050px;">Органы пищеварения</span>
<span class="t" style="left:69.80px;top:676.00px;font-size:17px;line-height:17px;color:#111;letter-spacing:-0.045px;">Мочеполовая система</span>
<span class="t" style="left:69.80px;top:703.00px;font-size:17px;line-height:17px;color:#111;letter-spacing:-0.059px;">Костно-мышечная система</span>
<span class="t" style="left:69.80px;top:730.00px;font-size:17px;line-height:17px;color:#111;letter-spacing:0.129px;">Диагноз</span>
<span class="t" style="left:69.80px;top:757.00px;font-size:17px;line-height:17px;color:#111;letter-spacing:-0.012px;">Заключение</span>
<span class="t" style="left:69.80px;top:784.00px;font-size:17px;line-height:17px;color:#111;letter-spacing:-0.091px;">Назначения</span>
<span class="t" style="left:66.00px;top:822.00px;font-size:17px;line-height:17px;font-weight:700;letter-spacing:-0.109px;">Консультации и повторные</span>
<span class="t" style="left:66.00px;top:842.00px;font-size:17px;line-height:17px;font-weight:700;letter-spacing:0.052px;">приемы</span>
<span class="t" style="left:92.60px;top:873.00px;font-size:17px;line-height:17px;color:#111;letter-spacing:-0.119px;">Консультация</span>
<span class="t" style="left:92.60px;top:894.00px;font-size:17px;line-height:17px;color:#111;letter-spacing:-0.162px;">отолариногола (10.03.2023</span>
<span class="t" style="left:92.60px;top:915.00px;font-size:17px;line-height:17px;color:#111;letter-spacing:-0.721px;">17:46)</span>
<span class="t" style="left:75.20px;top:945.00px;font-size:17px;line-height:17px;color:#111;letter-spacing:-0.142px;">Жалобы/анамнез</span>
<span class="t" style="left:75.20px;top:973.00px;font-size:17px;line-height:17px;color:#111;letter-spacing:-0.102px;">Объективные данные</span>
<span class="t" style="left:75.20px;top:1000.00px;font-size:17px;line-height:17px;color:#111;letter-spacing:0.112px;">Диагноз</span>
<div style="left:2px;top:1020px;width:319px;height:18px;overflow:hidden">
<span class="t" style="left:73.20px;top:9.00px;font-size:17px;line-height:17px;color:#111;letter-spacing:-0.012px;">Заключение</span>
</div>
<svg style="left:0;top:163px" width="330" height="880" viewBox="0 163 330 880"><g transform="translate(17.4,170.4) scale(0.4857,0.4667)"><rect x="0.5" y="1" width="41" height="31.5" rx="2.2" fill="#bcb5a8"/><rect x="0.5" y="2.3" width="41" height="28.4" rx="2" fill="url(#gCream)"/><rect x="0.5" y="2.3" width="41" height="28.4" rx="2" fill="none" stroke="#e9d9ae" stroke-width="0.6"/><path d="M4.5 4.8H20.5M22 4.8H25" stroke="#5a8eaa" stroke-width="0.7" opacity="0.85"/><path d="M3.5 7.6H25" stroke="#d2c6a8" stroke-width="0.9"/><path d="M4.5 11.6H9.5M17 11.6H24.5M4.5 16.6H8M17.5 16.6H28M4.5 19.6H13.5M17 19.6H31.5M4.5 21.6H13.5M17 21.6H31.5" stroke="#5a8eaa" stroke-width="0.75" stroke-dasharray="3 0.7" opacity="0.85"/><path d="M4.5 14.1H13.5M17 14.1H23.5" stroke="#8fb4c8" stroke-width="1.7" stroke-dasharray="2.2 0.5"/><path d="M3.5 24.7H38" stroke="#cfc3a6" stroke-width="0.9"/><rect x="3.5" y="26.3" width="34.5" height="1.8" fill="#cfc3a6"/><rect x="25.6" y="4" width="12.6" height="12.4" fill="#fff"/><path d="M25.6 16.6H38.4V5" fill="none" stroke="#b9a67a" stroke-width="0.7"/><ellipse cx="31.3" cy="8.6" rx="2.1" ry="2.6" fill="#5a5a58"/><rect x="29.6" y="10.5" width="3.4" height="2.2" fill="#5a5a58"/><rect x="28.6" y="12.4" width="6.8" height="2.8" fill="#2e2e2e"/><rect x="33.6" y="0.3" width="5.2" height="7.6" rx="1" fill="#fff" stroke="#8a8a8a" stroke-width="0.9"/><path d="M36.2 2.5V8.8" stroke="#a09880" stroke-width="1"/></g><g transform="translate(18,260) scale(1.3)"><path d="M1 0.5H9.6L13.3 4.2V15.2H1Z" fill="#e9f1f4" stroke="#9aa8b0" stroke-width="0.9"/><path d="M9.6 0.5V4.2H13.3" fill="#cfdae0" stroke="#9aa8b0" stroke-width="0.7"/><path d="M2.6 3.4H7.6M2.6 5.6H11M2.6 7.6H10.6M3 10.4H9M3 12.4H8" stroke="#a9b7be" stroke-width="0.8"/><rect x="9.8" y="9.4" width="5.4" height="7.2" rx="1" fill="url(#gGold)"/><path d="M9.8 11.6H15.2M9.8 13.8H15.2" stroke="#8a6414" stroke-width="0.7"/><rect x="5.2" y="13.8" width="5" height="2.8" rx="1" fill="url(#gGold)"/></g><g transform="translate(18,362.2)"><rect x="0.3" y="0.3" width="18.8" height="14" fill="#fdfdfd" stroke="#d8d8d8" stroke-width="0.6"/><rect x="0.3" y="0.3" width="18.8" height="2.2" fill="#f8c6c6"/><path d="M3 1.9H15" stroke="#8a8a8a" stroke-width="0.6"/><path d="M0.3 14.3H19.1" stroke="#a8a8a8" stroke-width="0.9"/><rect x="11.4" y="3.4" width="6.2" height="4" fill="#e9edf0"/><path d="M13 11H17" stroke="#6aa0d0" stroke-width="0.9"/><path d="M3.4 4.6C1.6 6.6 3 10.4 5.6 12.4C7 13.6 9 11 8 8C7.4 6 6.6 5 5.8 4.4" fill="none" stroke="#4a5258" stroke-width="1.1"/><path d="M6 12.6C7.4 18.6 13.2 18.6 13 13.4C12.8 11 12.4 9.4 13.4 8" fill="none" stroke="#2e3438" stroke-width="1.1"/><circle cx="14.2" cy="7" r="1.7" fill="#7a8890" stroke="#3a4248" stroke-width="0.8"/></g><g transform="translate(17.5,820.4)"><rect x="0.3" y="0.3" width="19.2" height="17.6" rx="1" fill="#fdfdfd" stroke="#c9c9c9" stroke-width="0.6"/><rect x="0.6" y="0.6" width="18.6" height="2" fill="#f8c2c2"/><g transform="translate(0.9,1.8) scale(0.47)"><path d="M1 32C1 21 3 17.6 8 17.2H13C18 17.6 20 21 20 32Z" fill="#fbfbfb" stroke="#9a9a9a" stroke-width="0.7"/><path d="M8 17.2L10.6 25L13.6 17.2Z" fill="#6a9cc4"/><path d="M7 17.4L10.6 29L14.4 17.4" fill="none" stroke="#c9c9c9" stroke-width="0.9"/><rect x="7.4" y="4.6" width="8" height="12.4" rx="3.6" fill="#f0c2b2"/><path d="M8.4 13.4H14.4V16C13 17.6 10 17.6 8.4 16Z" fill="#e09a88"/><path d="M5.6 11.6C4.6 3 8 0.2 11.8 0.2S18.6 3 17.6 11.6L16.2 8.4C16 5.6 13 4.6 11.4 4.6S8 6 7.4 8.4Z" fill="#6a5558"/><path d="M20.4 32C20.4 21 22 17.6 27 17.2H32C37 17.6 38.6 21 38.6 32Z" fill="#fbfbfb" stroke="#9a9a9a" stroke-width="0.7"/><path d="M26 17.2L29.2 26L32.4 17.2Z" fill="#d8808e"/><path d="M25 17.4L29.2 29L33.4 17.4" fill="none" stroke="#c9c9c9" stroke-width="0.9"/><path d="M21 18.8C20.4 8 22.6 0.2 29.6 0.2S38.8 8 38.2 18.8L33.6 17.6H25.4Z" fill="#b5a288"/><rect x="25.8" y="5.6" width="7" height="11.6" rx="3.2" fill="#f1c6b8"/><path d="M26.6 13.6H32V16C31 17.4 28 17.4 26.6 16Z" fill="#e2a090"/><path d="M1 32.4H38.6" stroke="#6e6e6e" stroke-width="1.2"/></g><path d="M1 18H19" stroke="#9a9a9a" stroke-width="1"/></g><g transform="translate(66.6,360.1)"><path d="M0 0H17.8V35.6L8.9 27.3L0 35.6Z" fill="url(#gBm)"/><rect x="0" y="0" width="17.8" height="2.4" fill="#f9a31c"/><path d="M0.4 2.4V34.6M17.400000000000002 2.4V34.6" stroke="#f4d66a" stroke-width="0.8" opacity="0.7"/><g transform="translate(3.4,22.9) rotate(-40.8)"><rect x="2.6" y="-1.5" width="9" height="3" fill="#f2c818"/><rect x="2.6" y="-1.5" width="9" height="1" fill="#fbe460"/><rect x="2.6" y="0.7" width="9" height="0.8" fill="#d8a408"/><rect x="11.6" y="-1.5" width="1.8" height="3" fill="#b4b4b4"/><rect x="13.4" y="-1.5" width="2" height="3" rx="0.8" fill="#ee8a8a"/><path d="M2.6 -1.5L0 0L2.6 1.5Z" fill="#f0c8a0"/><path d="M0.9 -0.5L0 0L0.9 0.5Z" fill="#443"/><path d="M0.4 1.2L2.8 2.2" stroke="#e0503a" stroke-width="0.8"/></g></g><g transform="translate(70.6,867)"><path d="M0 0H17.8V35.4L8.9 27.099999999999998L0 35.4Z" fill="url(#gBm)"/><rect x="0" y="0" width="17.8" height="2.4" fill="#f9a31c"/><path d="M0.4 2.4V34.4M17.400000000000002 2.4V34.4" stroke="#f4d66a" stroke-width="0.8" opacity="0.7"/><g transform="translate(3.4,22.9) rotate(-40.8)"><rect x="2.6" y="-1.5" width="9" height="3" fill="#f2c818"/><rect x="2.6" y="-1.5" width="9" height="1" fill="#fbe460"/><rect x="2.6" y="0.7" width="9" height="0.8" fill="#d8a408"/><rect x="11.6" y="-1.5" width="1.8" height="3" fill="#b4b4b4"/><rect x="13.4" y="-1.5" width="2" height="3" rx="0.8" fill="#ee8a8a"/><path d="M2.6 -1.5L0 0L2.6 1.5Z" fill="#f0c8a0"/><path d="M0.9 -0.5L0 0L0.9 0.5Z" fill="#443"/><path d="M0.4 1.2L2.8 2.2" stroke="#e0503a" stroke-width="0.8"/></g></g></svg>
<div style="left:358px;top:170px;width:1676px;height:874px;background:#ffffff;"></div>
<div style="left:360px;top:172px;width:1672px;height:872px;background:#f9f9f9;border:1px solid #d0d2d5;"></div>
<div style="left:2041px;top:163px;width:21px;height:881px;background:#f0f0f0;border-left:1px solid #fff;"></div>
<div style="left:2042px;top:185px;width:20px;height:389px;background:#cdcdcd;"></div>
<div style="left:2042px;top:574px;width:20px;height:449px;background:#f0f0f0;border-left:1px solid #d4d4d4;border-right:1px solid #d4d4d4;"></div>
<div style="left:2042px;top:164px;width:20px;height:20px;background:#f0f0f0;border:1px solid #c9cbcd;"></div>
<div style="left:2042px;top:184px;width:20px;height:1px;background:#ffffff;"></div>
<div style="left:2042px;top:1023px;width:20px;height:20px;background:#f0f0f0;border:1px solid #c9cbcd;"></div>
<svg style="left:2046px;top:170px;" width="11" height="9" viewBox="0 0 11 9"><path d="M1 7.6L5.5 2.4L10 7.6" fill="none" stroke="#999" stroke-width="2"/></svg>
<svg style="left:2046px;top:1029px;" width="11" height="9" viewBox="0 0 11 9"><path d="M1 1.4L5.5 6.6L10 1.4" fill="none" stroke="#999" stroke-width="2"/></svg>
<svg style="left:915px;top:190.5px" width="33" height="26" viewBox="0 0 33 26"><g transform="translate(0,0) scale(0.7762,0.7758)"><rect x="0.5" y="1" width="41" height="31.5" rx="2.2" fill="#bcb5a8"/><rect x="0.5" y="2.3" width="41" height="28.4" rx="2" fill="url(#gCream)"/><rect x="0.5" y="2.3" width="41" height="28.4" rx="2" fill="none" stroke="#e9d9ae" stroke-width="0.6"/><path d="M4.5 4.8H20.5M22 4.8H25" stroke="#5a8eaa" stroke-width="0.7" opacity="0.85"/><path d="M3.5 7.6H25" stroke="#d2c6a8" stroke-width="0.9"/><path d="M4.5 11.6H9.5M17 11.6H24.5M4.5 16.6H8M17.5 16.6H28M4.5 19.6H13.5M17 19.6H31.5M4.5 21.6H13.5M17 21.6H31.5" stroke="#5a8eaa" stroke-width="0.75" stroke-dasharray="3 0.7" opacity="0.85"/><path d="M4.5 14.1H13.5M17 14.1H23.5" stroke="#8fb4c8" stroke-width="1.7" stroke-dasharray="2.2 0.5"/><path d="M3.5 24.7H38" stroke="#cfc3a6" stroke-width="0.9"/><rect x="3.5" y="26.3" width="34.5" height="1.8" fill="#cfc3a6"/><rect x="25.6" y="4" width="12.6" height="12.4" fill="#fff"/><path d="M25.6 16.6H38.4V5" fill="none" stroke="#b9a67a" stroke-width="0.7"/><ellipse cx="31.3" cy="8.6" rx="2.1" ry="2.6" fill="#5a5a58"/><rect x="29.6" y="10.5" width="3.4" height="2.2" fill="#5a5a58"/><rect x="28.6" y="12.4" width="6.8" height="2.8" fill="#2e2e2e"/><rect x="33.6" y="0.3" width="5.2" height="7.6" rx="1" fill="#fff" stroke="#8a8a8a" stroke-width="0.9"/><path d="M36.2 2.5V8.8" stroke="#a09880" stroke-width="1"/></g></svg>
<span class="t" style="left:957.70px;top:197.00px;font-size:29px;line-height:29px;color:#111;letter-spacing:-0.101px;">История болезни №</span>
<div style="left:1230.5px;top:195px;width:112px;height:34px;background:#fff;border:1px solid #e8e8e8;"></div>
<span class="t" style="left:1235.50px;top:197.00px;font-size:29px;line-height:29px;color:#111;letter-spacing:-0.505px;">10/2023</span>
<div style="left:1888px;top:192.5px;width:130px;height:32px;background:#8fd1fb;border-radius:3px;"></div>
<span class="t" style="left:1893.60px;top:200.00px;font-size:21.8px;line-height:21.8px;color:#111;letter-spacing:0.051px;">ИБ открыта</span>
<div style="left:361px;top:173px;width:1670px;height:870px;overflow:hidden">
<div class="grp" style="left:14px;top:68px;width:655px;height:819px"></div>
<span class="t" style="left:22.30px;top:77.00px;font-size:17px;line-height:17px;font-weight:700;letter-spacing:0.062px;">Пациент</span>
<span class="t" style="left:24.90px;top:106.00px;font-size:17px;line-height:17px;color:#111;letter-spacing:-0.415px;">Фамилия</span>
<span class="t" style="left:344.80px;top:106.00px;font-size:17px;line-height:17px;color:#111;letter-spacing:-0.362px;">Имя</span>
<span class="t" style="left:504.50px;top:106.00px;font-size:17px;line-height:17px;color:#111;letter-spacing:-0.372px;">Отчество</span>
<div class="inp" style="left:24px;top:128px;width:315px;height:29px"></div>
<div class="inp" style="left:344px;top:128px;width:155px;height:29px"></div>
<div class="inp" style="left:504px;top:128px;width:155px;height:29px"></div>
<span class="t" style="left:28.70px;top:133.00px;font-size:17px;line-height:17px;color:#111;letter-spacing:-0.026px;">Иванова</span>
<span class="t" style="left:348.70px;top:133.00px;font-size:17px;line-height:17px;color:#111;letter-spacing:-0.293px;">Анна</span>
<span class="t" style="left:24.90px;top:166.00px;font-size:17px;line-height:17px;color:#111;letter-spacing:-0.165px;">Обращение:</span>
<div class="inp" style="left:127px;top:159px;width:532px;height:29px"></div>
<span class="t" style="left:24.90px;top:199.00px;font-size:17px;line-height:17px;color:#111;letter-spacing:-0.484px;">Пол:</span>
<div class="cmb" style="left:154px;top:193px;width:105px;height:29px"></div>
<span class="t" style="left:159.20px;top:201.00px;font-size:17px;line-height:17px;color:#111;letter-spacing:-0.722px;">Жен</span>
<svg style="left:245px;top:205.3px;" width="8" height="5" viewBox="0 0 8 5"><path d="M0 0H8L4.0 5Z" fill="#6a6a6a"/></svg>
<span class="t" style="left:24.90px;top:234.00px;font-size:17px;line-height:17px;color:#111;letter-spacing:-0.081px;">Дата рождения:</span>
<div class="cmb" style="left:154px;top:228px;width:132px;height:30px"></div>
<span class="t" style="left:163.50px;top:236.00px;font-size:17px;line-height:17px;color:#111;letter-spacing:-0.510px;">01.03.2000</span>
<svg style="left:265.79999999999995px;top:235.60000000000002px;" width="14" height="17" viewBox="0 0 14 17"><rect x="0.75" y="5.8" width="12.5" height="10.4" rx="0.6" fill="none" stroke="#707070" stroke-width="1.4"/><rect x="0.75" y="5" width="12.5" height="2" fill="#707070"/><path d="M3.6 0.4L3.2 4.4M10.2 0.4L10.6 4.4" stroke="#707070" stroke-width="1.5" stroke-linecap="round"/><rect x="5.6" y="2.4" width="2.4" height="3.4" fill="#707070"/><path d="M4.6 8.9H9.4L6.6 14.4" fill="none" stroke="#707070" stroke-width="1.5"/></svg>
<span class="t" style="left:291.40px;top:234.00px;font-size:17px;line-height:17px;color:#111;letter-spacing:-0.290px;">Возраст: 23 года</span>
<span class="t" style="left:24.90px;top:265.00px;font-size:17px;line-height:17px;color:#111;letter-spacing:-0.104px;">Место работы:</span>
<div class="inp" style="left:24px;top:289px;width:635px;height:29px"></div>
<span class="t" style="left:24.90px;top:325.00px;font-size:17px;line-height:17px;color:#111;letter-spacing:-0.209px;">Занимаемая должность:</span>
<div class="inp" style="left:24px;top:349px;width:635px;height:28px"></div>
<div class="grp" style="left:23px;top:382px;width:637px;height:302px"></div>
<span class="t" style="left:31.70px;top:392.00px;font-size:17px;line-height:17px;font-weight:700;letter-spacing:0.064px;">Домашний адрес</span>
<span class="t" style="left:36.70px;top:423.00px;font-size:17px;line-height:17px;color:#111;letter-spacing:-0.266px;">Быстрый ввод адреса</span>
<div class="inp" style="left:36px;top:443px;width:611px;height:29px"></div>
<span class="t" style="left:36.70px;top:484.00px;font-size:17px;line-height:17px;color:#111;letter-spacing:-0.826px;">Страна</span>
<span class="t" style="left:243.50px;top:484.00px;font-size:17px;line-height:17px;color:#111;letter-spacing:-0.553px;">Область</span>
<span class="t" style="left:451.10px;top:484.00px;font-size:17px;line-height:17px;color:#111;letter-spacing:-0.520px;">Район</span>
<div class="cmb" style="left:36px;top:509px;width:197px;height:31px"></div>
<svg style="left:219.29999999999995px;top:521.8px;" width="8" height="5" viewBox="0 0 8 5"><path d="M0 0H8L4.0 5Z" fill="#6a6a6a"/></svg>
<div class="inp" style="left:243px;top:509px;width:197px;height:29px"></div>
<div class="inp" style="left:450px;top:509px;width:197px;height:29px"></div>
<span class="t" style="left:37.10px;top:552.00px;font-size:17px;line-height:17px;color:#111;letter-spacing:-0.173px;">Тип нас. пункта</span>
<span class="t" style="left:243.90px;top:552.00px;font-size:17px;line-height:17px;color:#111;letter-spacing:-0.167px;">Название нас. пункта</span>
<span class="t" style="left:451.10px;top:552.00px;font-size:17px;line-height:17px;color:#111;letter-spacing:-0.470px;">Улица</span>
<div class="inp" style="left:36px;top:577px;width:197px;height:29px"></div>
<div class="inp" style="left:243px;top:577px;width:197px;height:29px"></div>
<div class="inp" style="left:450px;top:577px;width:197px;height:29px"></div>
<span class="t" style="left:40.60px;top:582.00px;font-size:17px;line-height:17px;color:#111;letter-spacing:0.387px;">город</span>
<span class="t" style="left:36.70px;top:617.00px;font-size:17px;line-height:17px;color:#111;letter-spacing:-0.030px;">Дом</span>
<span class="t" style="left:140.40px;top:617.00px;font-size:17px;line-height:17px;color:#111;letter-spacing:0.074px;">Корпус</span>
<span class="t" style="left:243.90px;top:617.00px;font-size:17px;line-height:17px;color:#111;letter-spacing:-0.169px;">Квартира</span>
<div class="inp" style="left:36px;top:642px;width:93px;height:29px"></div>
<div class="inp" style="left:140px;top:642px;width:93px;height:29px"></div>
<div class="inp" style="left:243px;top:642px;width:93px;height:29px"></div>
<div class="grp" style="left:23px;top:687px;width:637px;height:77px"></div>
<span class="t" style="left:31.70px;top:696.00px;font-size:17px;line-height:17px;font-weight:700;letter-spacing:-0.621px;">Телефоны</span>
<div style="left:34px;top:723px;width:105px;height:30px;background:#5da37c;border:1px solid #559f76;box-shadow:inset 0 0 0 1px #86bf9f"></div>
<span class="t" style="left:49.10px;top:729.00px;font-size:17px;line-height:17px;color:#fff;letter-spacing:-0.134px;">Добавить</span>
<span class="t" style="left:24.90px;top:773.00px;font-size:17px;line-height:17px;color:#111;letter-spacing:-0.484px;">E-mail:</span>
<div class="inp" style="left:81px;top:768px;width:254px;height:28px"></div>
<div style="left:340px;top:774.5px;width:17px;height:16.5px;background:#f3f3f3;border:1px solid #d9d9d9"></div>
<span class="t" style="left:362.60px;top:776.00px;font-size:17px;line-height:17px;color:#5c5c5c;letter-spacing:0.452px;">Отправлять результаты</span>
<span class="t" style="left:24.90px;top:807.00px;font-size:17px;line-height:17px;color:#111;letter-spacing:-0.688px;">Язык:</span>
<div class="cmb" style="left:72px;top:802px;width:587px;height:29px"></div>
<svg style="left:644.3px;top:814.2px;" width="8" height="5" viewBox="0 0 8 5"><path d="M0 0H8L4.0 5Z" fill="#6a6a6a"/></svg>
<span class="t" style="left:24.90px;top:843.00px;font-size:17px;line-height:17px;color:#111;letter-spacing:0.005px;">Поликлиника:</span>
<div class="cmb" style="left:224px;top:836px;width:346px;height:32px"></div>
<svg style="left:555.2px;top:849px;" width="8" height="5" viewBox="0 0 8 5"><path d="M0 0H8L4.0 5Z" fill="#6a6a6a"/></svg>
<div style="left:575.2px;top:843px;width:16.5px;height:16.5px;background:#fff;border:1px solid #d2d2d2"></div>
<span class="t" style="left:598.00px;top:843.00px;font-size:17px;line-height:17px;color:#111;letter-spacing:-0.724px;">Без СКК</span>
<div class="grp" style="left:672px;top:68px;width:984px;height:503px"></div>
<span class="t" style="left:680.50px;top:77.00px;font-size:17px;line-height:17px;font-weight:700;letter-spacing:-0.153px;">Пребывание в санатории</span>
<span class="t" style="left:683.00px;top:111.00px;font-size:17px;line-height:17px;color:#111;letter-spacing:-0.066px;">Программа:</span>
<div class="cmb" style="left:890px;top:105px;width:756px;height:31px"></div>
<span class="t" style="left:899.60px;top:113.00px;font-size:17px;line-height:17px;color:#111;letter-spacing:-0.355px;">GolodSpa 3</span>
<svg style="left:1631px;top:118px;" width="8" height="5" viewBox="0 0 8 5"><path d="M0 0H8L4.0 5Z" fill="#6a6a6a"/></svg>
<span class="t" style="left:680.60px;top:154.00px;font-size:17px;line-height:17px;color:#111;letter-spacing:0.115px;">Лечебные программы:</span>
<div class="cmb" style="left:890px;top:141px;width:756px;height:106px"></div>
<div style="left:891px;top:142px;width:754px;height:38px;background:#f6f6f6;border-bottom:1px solid #e1e2ec"></div>
<div style="left:946px;top:143px;width:1px;height:36px;background:#d5d6e4"></div>
<div style="left:1196px;top:143px;width:1px;height:36px;background:#d5d6e4"></div>
<div style="left:1269px;top:143px;width:1px;height:36px;background:#d5d6e4"></div>
<div style="left:1372.4px;top:143px;width:1px;height:36px;background:#d5d6e4"></div>
<div style="left:1438.3px;top:143px;width:1px;height:36px;background:#d5d6e4"></div>
<div style="left:1569.5px;top:143px;width:1px;height:36px;background:#d5d6e4"></div>
<span class="t" style="left:952.50px;top:152.00px;font-size:17px;line-height:17px;font-weight:700;letter-spacing:-0.150px;">Название</span>
<span class="t" style="left:1202.50px;top:152.00px;font-size:17px;line-height:17px;font-weight:700;letter-spacing:-0.099px;">Начало</span>
<span class="t" style="left:1275.20px;top:152.00px;font-size:17px;line-height:17px;font-weight:700;">Окончание</span>
<span class="t" style="left:1379.00px;top:152.00px;font-size:17px;line-height:17px;font-weight:700;letter-spacing:0.116px;">Лимит</span>
<span class="t" style="left:1444.00px;top:152.00px;font-size:17px;line-height:17px;font-weight:700;letter-spacing:-0.203px;">Отпусков</span>
<div style="left:1575.9px;top:147px;width:68.59999999999991px;height:28px;overflow:hidden">
<span class="t" style="left:0.00px;top:5.00px;font-size:17px;line-height:17px;font-weight:700;letter-spacing:-0.884px;">Инициатор</span>
</div>
<svg style="left:1177px;top:151.8px;" width="17" height="18" viewBox="0 0 17 18"><path d="M0.2 0.2H16.4V1.8L11.2 7.2V17.2L5 12.6V7.2L0.2 1.8Z" fill="#838383"/></svg>
<svg style="left:1550.7px;top:151.8px;" width="17" height="18" viewBox="0 0 17 18"><path d="M0.2 0.2H16.4V1.8L11.2 7.2V17.2L5 12.6V7.2L0.2 1.8Z" fill="#838383"/></svg>
<div style="left:891px;top:223px;width:754px;height:22.5px;background:#f5f5f5"></div>
<div style="left:914px;top:228px;width:680px;height:12px;background:#c9ccdc"></div>
<svg style="left:899px;top:228.8px;" width="7" height="11" viewBox="0 0 7 11"><path d="M7 0V11L0 5.5Z" fill="#555"/></svg>
<svg style="left:1627.5px;top:228.8px;" width="7" height="11" viewBox="0 0 7 11"><path d="M0 0V11L7 5.5Z" fill="#555"/></svg>
<div style="left:682px;top:190px;width:203px;height:29px;background:#5da37c;border:1px solid #559f76;box-shadow:inset 0 0 0 1px #86bf9f"></div>
<span class="t" style="left:746.10px;top:195.00px;font-size:17px;line-height:17px;color:#fff;letter-spacing:-0.077px;">Добавить</span>
<span class="t" style="left:683.00px;top:258.00px;font-size:17px;line-height:17px;color:#111;letter-spacing:-0.033px;">Срок лечения по путёвке:</span>
<div class="cmb" style="left:890px;top:252px;width:132px;height:31px"></div>
<span class="t" style="left:900.60px;top:260.00px;font-size:17px;line-height:17px;color:#111;letter-spacing:-0.688px;">10.03.2023</span>
<svg style="left:1001.5999999999999px;top:259.2px;" width="14" height="17" viewBox="0 0 14 17"><rect x="0.75" y="5.8" width="12.5" height="10.4" rx="0.6" fill="none" stroke="#707070" stroke-width="1.4"/><rect x="0.75" y="5" width="12.5" height="2" fill="#707070"/><path d="M3.6 0.4L3.2 4.4M10.2 0.4L10.6 4.4" stroke="#707070" stroke-width="1.5" stroke-linecap="round"/><rect x="5.6" y="2.4" width="2.4" height="3.4" fill="#707070"/><path d="M4.6 8.9H9.4L6.6 14.4" fill="none" stroke="#707070" stroke-width="1.5"/></svg>
<span class="t" style="left:1027.40px;top:258.00px;font-size:17px;line-height:17px;color:#111;">-</span>
<div class="cmb" style="left:1039px;top:252px;width:132px;height:31px"></div>
<span class="t" style="left:1048.50px;top:260.00px;font-size:17px;line-height:17px;color:#111;letter-spacing:-0.566px;">30.03.2023</span>
<svg style="left:1150.6px;top:259.2px;" width="14" height="17" viewBox="0 0 14 17"><rect x="0.75" y="5.8" width="12.5" height="10.4" rx="0.6" fill="none" stroke="#707070" stroke-width="1.4"/><rect x="0.75" y="5" width="12.5" height="2" fill="#707070"/><path d="M3.6 0.4L3.2 4.4M10.2 0.4L10.6 4.4" stroke="#707070" stroke-width="1.5" stroke-linecap="round"/><rect x="5.6" y="2.4" width="2.4" height="3.4" fill="#707070"/><path d="M4.6 8.9H9.4L6.6 14.4" fill="none" stroke="#707070" stroke-width="1.5"/></svg>
<span class="t" style="left:1176.00px;top:258.00px;font-size:17px;line-height:17px;color:#111;letter-spacing:-0.475px;">дней: 21</span>
<span class="t" style="left:683.00px;top:294.00px;font-size:17px;line-height:17px;color:#111;letter-spacing:-0.297px;">Прибыл:</span>
<div class="cmb" style="left:890px;top:288px;width:132px;height:30px"></div>
<span class="t" style="left:900.60px;top:296.00px;font-size:17px;line-height:17px;color:#111;letter-spacing:-0.688px;">10.03.2023</span>
<svg style="left:1001.5999999999999px;top:295px;" width="14" height="17" viewBox="0 0 14 17"><rect x="0.75" y="5.8" width="12.5" height="10.4" rx="0.6" fill="none" stroke="#707070" stroke-width="1.4"/><rect x="0.75" y="5" width="12.5" height="2" fill="#707070"/><path d="M3.6 0.4L3.2 4.4M10.2 0.4L10.6 4.4" stroke="#707070" stroke-width="1.5" stroke-linecap="round"/><rect x="5.6" y="2.4" width="2.4" height="3.4" fill="#707070"/><path d="M4.6 8.9H9.4L6.6 14.4" fill="none" stroke="#707070" stroke-width="1.5"/></svg>
<span class="t" style="left:683.00px;top:330.00px;font-size:17px;line-height:17px;color:#111;letter-spacing:-0.127px;">Планируемый отъезд:</span>
<div class="cmb" style="left:890px;top:324px;width:132px;height:30px"></div>
<span class="t" style="left:899.60px;top:330.00px;font-size:17px;line-height:17px;color:#c3c3c3;font-style:italic;letter-spacing:-0.613px;">Выберите д</span>
<svg style="left:1001.5999999999999px;top:331px;" width="14" height="17" viewBox="0 0 14 17"><rect x="0.75" y="5.8" width="12.5" height="10.4" rx="0.6" fill="none" stroke="#707070" stroke-width="1.4"/><rect x="0.75" y="5" width="12.5" height="2" fill="#707070"/><path d="M3.6 0.4L3.2 4.4M10.2 0.4L10.6 4.4" stroke="#707070" stroke-width="1.5" stroke-linecap="round"/><rect x="5.6" y="2.4" width="2.4" height="3.4" fill="#707070"/><path d="M4.6 8.9H9.4L6.6 14.4" fill="none" stroke="#707070" stroke-width="1.5"/></svg>
<span class="t" style="left:1066.50px;top:330.00px;font-size:17px;line-height:17px;color:#111;letter-spacing:-0.253px;">время:</span>
<div class="cmb" style="left:1124px;top:324px;width:167px;height:30px"></div>
<span class="t" style="left:1132.60px;top:330.00px;font-size:17px;line-height:17px;color:#c3c3c3;font-style:italic;letter-spacing:-0.519px;">Выберите время</span>
<svg style="left:1271px;top:332.2px;" width="14" height="14" viewBox="0 0 14 14"><circle cx="7" cy="7" r="6" fill="none" stroke="#666" stroke-width="1.3"/><path d="M7 3V7.3H10.3" fill="none" stroke="#666" stroke-width="1.1"/></svg>
<span class="t" style="left:683.00px;top:366.00px;font-size:17px;line-height:17px;color:#111;letter-spacing:-0.871px;">Выбыл:</span>
<div class="cmb" style="left:890px;top:360px;width:132px;height:30px"></div>
<span class="t" style="left:899.60px;top:366.00px;font-size:17px;line-height:17px;color:#c3c3c3;font-style:italic;letter-spacing:-0.613px;">Выберите д</span>
<svg style="left:1001.5999999999999px;top:367px;" width="14" height="17" viewBox="0 0 14 17"><rect x="0.75" y="5.8" width="12.5" height="10.4" rx="0.6" fill="none" stroke="#707070" stroke-width="1.4"/><rect x="0.75" y="5" width="12.5" height="2" fill="#707070"/><path d="M3.6 0.4L3.2 4.4M10.2 0.4L10.6 4.4" stroke="#707070" stroke-width="1.5" stroke-linecap="round"/><rect x="5.6" y="2.4" width="2.4" height="3.4" fill="#707070"/><path d="M4.6 8.9H9.4L6.6 14.4" fill="none" stroke="#707070" stroke-width="1.5"/></svg>
<span class="t" style="left:683.00px;top:397.00px;font-size:17px;line-height:17px;color:#111;letter-spacing:0.066px;">Количество к/дней:</span>
<span class="t" style="left:889.60px;top:397.00px;font-size:17px;line-height:17px;color:#111;">21</span>
<span class="t" style="left:683.00px;top:428.00px;font-size:17px;line-height:17px;color:#111;letter-spacing:0.048px;">Лечащий врач:</span>
<div class="inp" style="left:891px;top:423px;width:753px;height:29px"></div>
<div style="left:1622px;top:423px;width:22px;height:29px;background:#e8ebf6;border:1px solid #c6c8dc"></div>
<svg style="left:1629px;top:435.20000000000005px;" width="8" height="5" viewBox="0 0 8 5"><path d="M0 0H8L4.0 5Z" fill="#6a6a6a"/></svg>
<span class="t" style="left:895.70px;top:428.00px;font-size:17px;line-height:17px;color:#111;letter-spacing:-0.177px;">Иванова Анна Сергеевна 2 (4%)</span>
<span class="t" style="left:683.00px;top:464.00px;font-size:17px;line-height:17px;color:#111;letter-spacing:-0.448px;">Медсестра:</span>
<div class="cmb" style="left:891px;top:458px;width:753px;height:29px"></div>
<div style="left:1622px;top:458px;width:22px;height:29px;background:#e8ebf6;border:1px solid #c6c8dc"></div>
<svg style="left:1629px;top:470.5px;" width="8" height="5" viewBox="0 0 8 5"><path d="M0 0H8L4.0 5Z" fill="#6a6a6a"/></svg>
<span class="t" style="left:898.70px;top:462.00px;font-size:17px;line-height:17px;color:#111;letter-spacing:-0.032px;">Медицинский Пост№1 2 (4%)</span>
<span class="t" style="left:1139.70px;top:463.00px;font-size:15px;line-height:15px;color:#555;">x</span>
<span class="t" style="left:683.00px;top:499.00px;font-size:17px;line-height:17px;color:#111;letter-spacing:-0.045px;">Помещён в комнату:</span>
<div class="cmb" style="left:890px;top:492px;width:185px;height:32px"></div>
<span class="t" style="left:900.60px;top:501.00px;font-size:17px;line-height:17px;color:#111;letter-spacing:-0.130px;">13 (Жилой корпус)</span>
<svg style="left:1059px;top:505.5px;" width="8" height="5" viewBox="0 0 8 5"><path d="M0 0H8L4.0 5Z" fill="#6a6a6a"/></svg>
<span class="t" style="left:683.00px;top:536.00px;font-size:17px;line-height:17px;color:#111;letter-spacing:-0.445px;">Отделение:</span>
<div class="cmb" style="left:890px;top:529px;width:756px;height:32px"></div>
<svg style="left:1630.5px;top:542.3px;" width="8" height="5" viewBox="0 0 8 5"><path d="M0 0H8L4.0 5Z" fill="#6a6a6a"/></svg>
<div class="grp" style="left:672px;top:574px;width:984px;height:93px"></div>
<svg style="left:678px;top:582px;" width="22" height="22" viewBox="0 0 22 22"><circle cx="11" cy="11" r="10.7" fill="#c9c9c9"/><path d="M6.5 9H15.5L11 14Z" fill="#fff"/></svg>
<span class="t" style="left:706.40px;top:583.00px;font-size:17px;line-height:17px;font-weight:700;letter-spacing:0.122px;">Комментарий</span>
<div class="inp" style="left:678px;top:612px;width:972px;height:48px"></div>
<div class="grp" style="left:672px;top:670px;width:984px;height:158px"></div>
<span class="t" style="left:680.20px;top:679.00px;font-size:17px;line-height:17px;font-weight:700;letter-spacing:-0.202px;">Факторы вредности</span>
<div style="left:682px;top:706px;width:152px;height:30px;background:#5da37c;border:1px solid #559f76;box-shadow:inset 0 0 0 1px #86bf9f"></div>
<span class="t" style="left:690.30px;top:712.00px;font-size:17px;line-height:17px;color:#fff;letter-spacing:-0.124px;">Добавить фактор</span>
<div style="left:839px;top:706px;width:181px;height:30px;background:#5da37c;border:1px solid #559f76;box-shadow:inset 0 0 0 1px #86bf9f"></div>
<span class="t" style="left:847.30px;top:712.00px;font-size:17px;line-height:17px;color:#fff;letter-spacing:-0.159px;">Создать профосмотр</span>
<div style="left:1026px;top:706px;width:153px;height:30px;background:#798ba4;border:1px solid #7085a2;box-shadow:inset 0 0 0 1px #99a8bc"></div>
<span class="t" style="left:1033.90px;top:712.00px;font-size:17px;line-height:17px;color:#d0d3d8;letter-spacing:-0.235px;">Отменить фактор</span>
<div class="grp" style="left:681px;top:740px;width:967px;height:78px"></div>
<span class="t" style="left:689.30px;top:749.00px;font-size:17px;line-height:17px;font-weight:700;letter-spacing:-0.382px;">Профессия</span>
<div class="cmb" style="left:692px;top:776px;width:774px;height:32px"></div>
<div style="left:1444.5px;top:776.4px;width:21.5px;height:31.1px;background:#e8ebf6;border:1px solid #c6c8dc"></div>
<svg style="left:1452.2px;top:789.2px;" width="8" height="5" viewBox="0 0 8 5"><path d="M0 0H8L4.0 5Z" fill="#6a6a6a"/></svg>
<div style="left:1471px;top:777px;width:165px;height:30px;background:#798ba4;border:1px solid #7085a2;box-shadow:inset 0 0 0 1px #99a8bc"></div>
<span class="t" style="left:1479.90px;top:783.00px;font-size:17px;line-height:17px;color:#d0d3d8;letter-spacing:-0.008px;">Синхронизировать</span>
</div>
<div style="left:2062px;top:0px;width:1px;height:1049px;background:#ffffff;"></div>
<div style="left:2063px;top:0px;width:1px;height:1050px;background:#555555;"></div>
</body></html>
